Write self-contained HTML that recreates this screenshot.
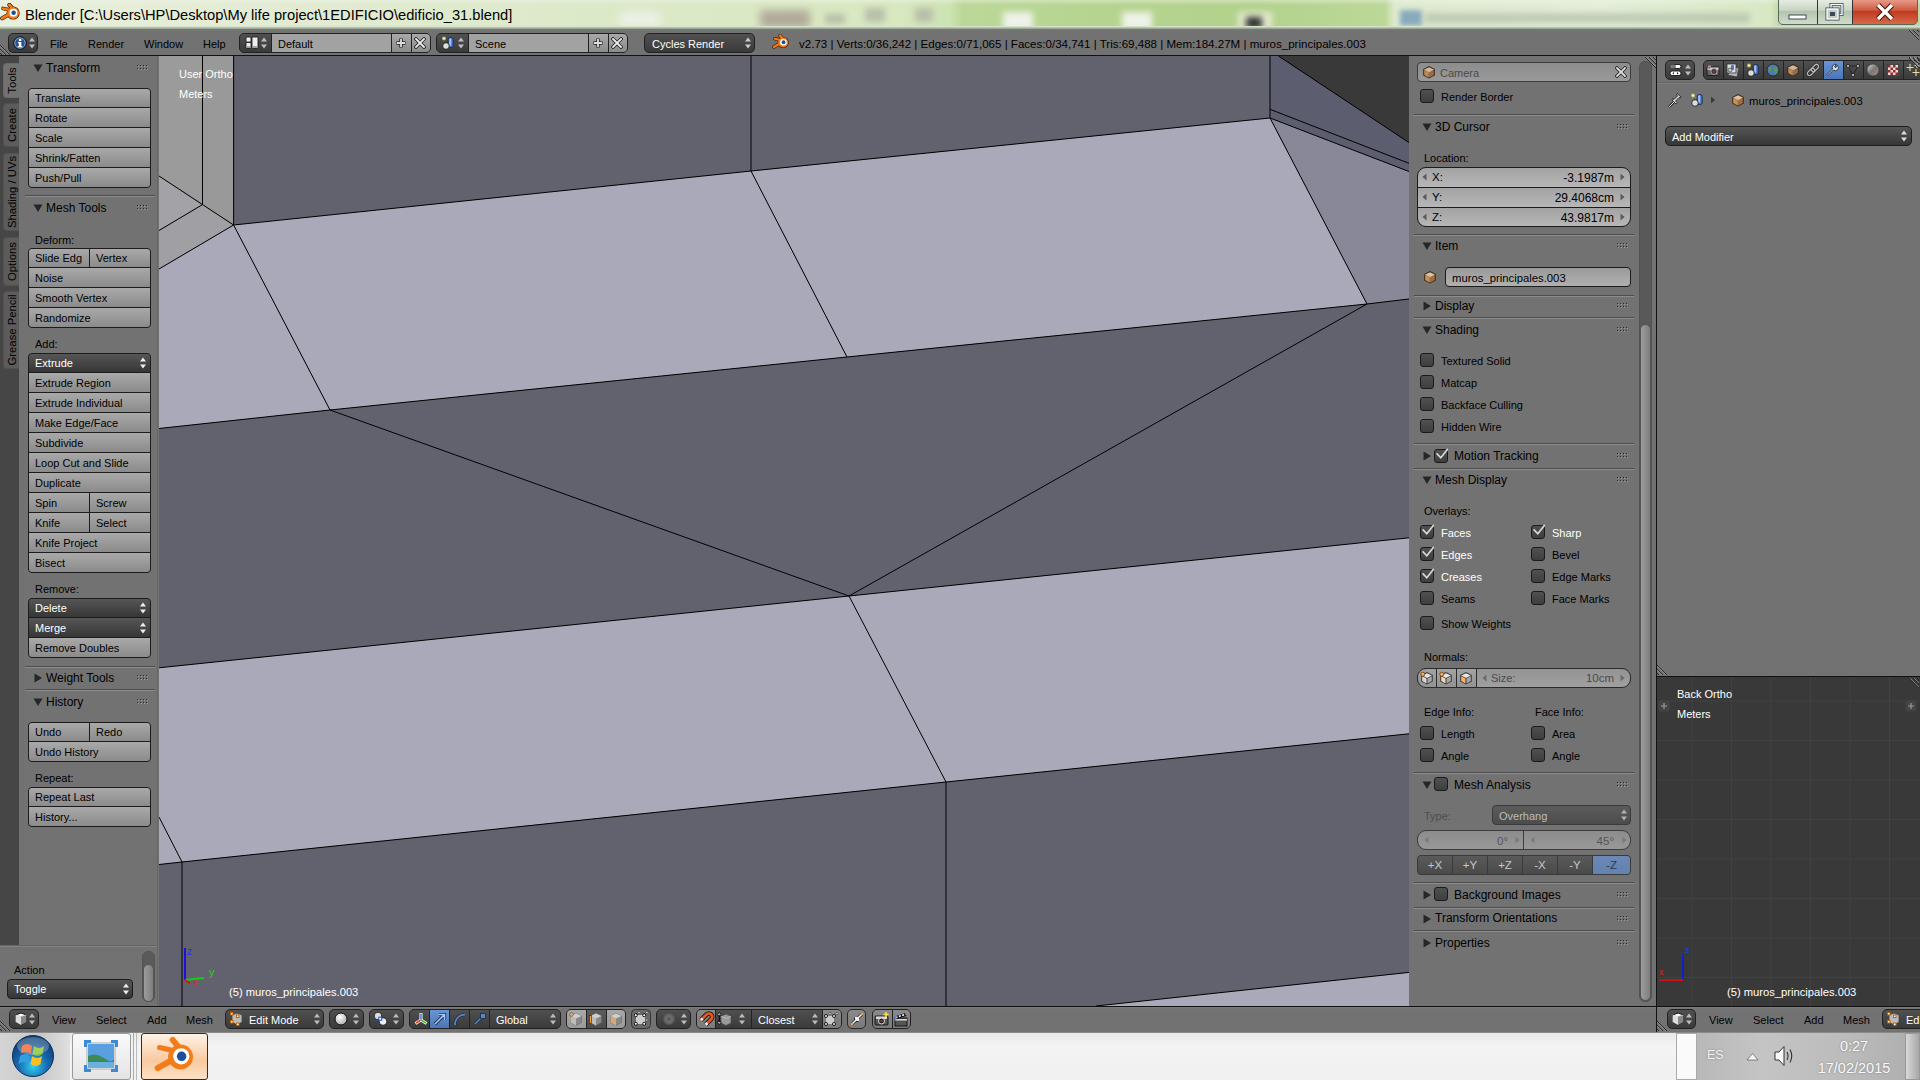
<!DOCTYPE html>
<html><head><meta charset="utf-8">
<style>
*{margin:0;padding:0;box-sizing:border-box}
html,body{width:1920px;height:1080px;overflow:hidden;background:#727272;font-family:"Liberation Sans",sans-serif;font-size:11px;color:#000}
.a{position:absolute}
.t{position:absolute;white-space:nowrap;line-height:1}
</style></head><body>

<div class="a" style="left:0px;top:0px;width:1920px;height:29px;background:linear-gradient(90deg,#e8efdc 0,#e2ebd2 300px,#dce9c8 600px,#d8e8c0 900px,#cde3b2 950px,#bcd898 962px,#b6d490 1100px,#b2d28c 1250px,#bcd898 1385px,#dfead0 1395px,#e4eed8 1600px,#d8e8c4 1770px,#c0d8a8 1780px)"></div>
<div class="a" style="left:0;top:0;width:1920px;height:29px;overflow:hidden"><div class="a" style="left:0;top:0;width:1920px;height:5px;opacity:0.45;background:linear-gradient(#f0f4ea,rgba(240,244,234,0))"></div><div class="a" style="left:760px;top:10px;width:50px;height:18px;background:#a09088;filter:blur(4px);opacity:0.7"></div><div class="a" style="left:620px;top:12px;width:40px;height:14px;background:#f4f4f4;filter:blur(4px);opacity:0.7"></div><div class="a" style="left:825px;top:14px;width:20px;height:10px;background:#b8c0a8;filter:blur(3px)"></div><div class="a" style="left:865px;top:8px;width:20px;height:14px;background:#b8c0a8;filter:blur(3px)"></div><div class="a" style="left:915px;top:8px;width:18px;height:14px;background:#b8c0a8;filter:blur(3px)"></div><div class="a" style="left:1003px;top:12px;width:30px;height:18px;background:#f8f8f8;filter:blur(3px);opacity:0.85"></div><div class="a" style="left:1122px;top:12px;width:30px;height:18px;background:#f8f8f8;filter:blur(3px);opacity:0.85"></div><div class="a" style="left:1238px;top:12px;width:34px;height:18px;background:#f0f0e0;filter:blur(3px);opacity:0.8"></div><div class="a" style="left:1246px;top:17px;width:16px;height:12px;background:#222;filter:blur(3px);opacity:0.9"></div><div class="a" style="left:1400px;top:10px;width:22px;height:16px;background:#5080b0;filter:blur(2.5px);opacity:0.6"></div><div class="a" style="left:1425px;top:13px;width:325px;height:10px;background:#a8b4a0;filter:blur(3px);opacity:0.6"></div><div class="a" style="left:0;top:26px;width:1920px;height:3px;background:linear-gradient(#e8eee0,#8a9a80)"></div></div>
<svg class="a" style="left:0px;top:3px" width="20" height="20" viewBox="0 0 20 20"><g transform="scale(0.625)"><g stroke="#3a1a00" stroke-linecap="round" fill="none"><path d="M20,9L15,3" stroke-width="6.5"/><path d="M17,11.5L5,8.8" stroke-width="6"/><path d="M15,18L3.5,24.5" stroke-width="6.5"/></g><circle cx="21" cy="16" r="10.5" fill="#3a1a00"/><g stroke="#f27c1a" stroke-linecap="round" fill="none"><path d="M20,9L15,3" stroke-width="4.5"/><path d="M17,11.5L5,8.8" stroke-width="4"/><path d="M15,18L3.5,24.5" stroke-width="4.5"/></g><circle cx="21" cy="16" r="9.5" fill="#f27c1a"/><circle cx="21.5" cy="15.5" r="6.2" fill="#fff"/><circle cx="21.8" cy="15.5" r="3.6" fill="#1b4f9c"/></g></svg>
<div class="a" style="left:1778px;top:-2px;width:140px;height:27px;border:1px solid #5a6a5a;border-radius:0 0 5px 5px;overflow:hidden;background:#333"><div class="a" style="left:0;top:0;width:38px;height:25px;background:linear-gradient(#e8eee4,#c8d4c4 45%,#b4c4b0 50%,#d0dccc)"></div><div class="a" style="left:39px;top:0;width:34px;height:25px;background:linear-gradient(#e8eee4,#c8d4c4 45%,#b4c4b0 50%,#d0dccc)"></div><div class="a" style="left:74px;top:0;width:66px;height:25px;background:linear-gradient(#e8a090,#d05a40 45%,#c03a20 50%,#d86a48)"></div></div>
<svg class="a" style="left:1788px;top:13px" width="20" height="8" viewBox="0 0 20 8"><rect x="1" y="2" width="17" height="4" fill="#fff" stroke="#3a4a5a" stroke-width="1"/></svg>
<svg class="a" style="left:1825px;top:3px" width="20" height="18" viewBox="0 0 20 18"><rect x="6" y="1.5" width="11" height="10" fill="none" stroke="#3a4a5a" stroke-width="3"/><rect x="6" y="1.5" width="11" height="10" fill="none" stroke="#fff" stroke-width="1.4"/><rect x="2" y="6" width="11" height="10" fill="#d8e0d8" stroke="#3a4a5a" stroke-width="3"/><rect x="2" y="6" width="11" height="10" fill="#c4ccc4" stroke="#fff" stroke-width="1.4"/><rect x="5" y="9" width="5" height="4" fill="#3a4a5a"/></svg>
<svg class="a" style="left:1873px;top:3px" width="24" height="18" viewBox="0 0 24 18"><path d="M5,2L19,16M19,2L5,16" stroke="#4a1a10" stroke-width="5.5"/><path d="M5,2L19,16M19,2L5,16" stroke="#fff" stroke-width="3.2"/></svg>
<div class="t" style="left:25px;top:7.9px;font-size:14.7px;color:#000;">Blender [C:\Users\HP\Desktop\My life project\1EDIFICIO\edificio_31.blend]</div>
<div class="a" style="left:0px;top:29px;width:1920px;height:27px;background:linear-gradient(#7a7a7a 0,#727272 2px);border-bottom:1px solid #111"></div>
<div class="a" style="left:8px;top:33px;width:30px;height:20px;border:1px solid #222;border-radius:5px;background:linear-gradient(#505050,#3a3a3a);"></div>
<svg class="a" style="left:13px;top:36px" width="14" height="14" viewBox="0 0 14 14"><circle cx="7" cy="7" r="6.3" fill="#2c5590" stroke="#111" stroke-width="1"/><circle cx="7" cy="7" r="5.2" fill="none" stroke="#8aa8d4" stroke-width="0.9"/><rect x="5.9" y="3" width="2.4" height="2" fill="#fff"/><path d="M5,6H8.3V10H9.2V11.3H4.8V10H5.9V7.2H5Z" fill="#fff"/></svg>
<svg class="a" style="left:28px;top:36px" width="8" height="14" viewBox="0 0 8 14"><path d="M1,5.5L4,1.5L7,5.5ZM1,8.5L4,12.5L7,8.5Z" fill="#bdbdbd"/></svg>
<div class="t" style="left:50px;top:38.7px;font-size:11px;color:#000;">File</div>
<div class="t" style="left:88px;top:38.7px;font-size:11px;color:#000;">Render</div>
<div class="t" style="left:144px;top:38.7px;font-size:11px;color:#000;">Window</div>
<div class="t" style="left:203px;top:38.7px;font-size:11px;color:#000;">Help</div>
<div class="a" style="left:239px;top:33px;width:192px;height:20px;border:1px solid #222;border-radius:5px;overflow:hidden;background:#222"><div class="a" style="left:0px;top:0;width:31px;height:18px;background:linear-gradient(#505050,#3a3a3a)"></div><div class="a" style="left:32px;top:0;width:119px;height:18px;background:linear-gradient(#a2a2a2,#a2a2a2)"></div><div class="a" style="left:152px;top:0;width:19px;height:18px;background:linear-gradient(#a8a8a8,#8c8c8c)"></div><div class="a" style="left:172px;top:0;width:19px;height:18px;background:linear-gradient(#a8a8a8,#8c8c8c)"></div></div>
<svg class="a" style="left:245px;top:36px" width="14" height="14" viewBox="0 0 14 14"><rect x="1" y="1" width="5" height="5" rx="1" fill="#eee" stroke="#111" stroke-width="0.8"/><rect x="1" y="6.5" width="5" height="6" rx="1" fill="#eee" stroke="#111" stroke-width="0.8"/><rect x="7" y="1" width="6" height="11.5" rx="1" fill="#eee" stroke="#111" stroke-width="0.8"/><path d="M2,11H5M8,11H12" stroke="#333" stroke-width="0.8"/></svg>
<svg class="a" style="left:260px;top:36px" width="8" height="14" viewBox="0 0 8 14"><path d="M1,5.5L4,1.5L7,5.5ZM1,8.5L4,12.5L7,8.5Z" fill="#bdbdbd"/></svg>
<div class="t" style="left:278px;top:38.7px;font-size:11px;color:#000;">Default</div>
<svg class="a" style="left:395px;top:37px" width="12" height="12" viewBox="0 0 12 12"><path d="M6,1.5V10.5M1.5,6H10.5" stroke="#222" stroke-width="3.4"/><path d="M6,2V10M2,6H10" stroke="#ddd" stroke-width="1.8"/></svg>
<svg class="a" style="left:414px;top:37px" width="12" height="12" viewBox="0 0 12 12"><path d="M2,2L10,10M10,2L2,10" stroke="#222" stroke-width="3.4" stroke-linecap="square"/><path d="M2,2L10,10M10,2L2,10" stroke="#eee" stroke-width="1.8" stroke-linecap="square"/></svg>
<div class="a" style="left:436px;top:33px;width:192px;height:20px;border:1px solid #222;border-radius:5px;overflow:hidden;background:#222"><div class="a" style="left:0px;top:0;width:31px;height:18px;background:linear-gradient(#505050,#3a3a3a)"></div><div class="a" style="left:32px;top:0;width:119px;height:18px;background:linear-gradient(#a2a2a2,#a2a2a2)"></div><div class="a" style="left:152px;top:0;width:19px;height:18px;background:linear-gradient(#a8a8a8,#8c8c8c)"></div><div class="a" style="left:172px;top:0;width:19px;height:18px;background:linear-gradient(#a8a8a8,#8c8c8c)"></div></div>
<svg class="a" style="left:441px;top:36px" width="14" height="14" viewBox="0 0 14 14"><circle cx="3" cy="2.5" r="2" fill="#e8e860" opacity="0.7"/><circle cx="3" cy="2.5" r="1" fill="#ffffc0"/><rect x="7.2" y="1.5" width="5" height="10" rx="2" fill="#4a7ad0" stroke="#112244" stroke-width="0.8"/><rect x="8.2" y="2.5" width="2" height="7" fill="#a8c4f0"/><circle cx="5" cy="10" r="3.3" fill="#ddd" stroke="#111" stroke-width="0.8"/></svg>
<svg class="a" style="left:457px;top:36px" width="8" height="14" viewBox="0 0 8 14"><path d="M1,5.5L4,1.5L7,5.5ZM1,8.5L4,12.5L7,8.5Z" fill="#bdbdbd"/></svg>
<div class="t" style="left:475px;top:38.7px;font-size:11px;color:#000;">Scene</div>
<svg class="a" style="left:592px;top:37px" width="12" height="12" viewBox="0 0 12 12"><path d="M6,1.5V10.5M1.5,6H10.5" stroke="#222" stroke-width="3.4"/><path d="M6,2V10M2,6H10" stroke="#ddd" stroke-width="1.8"/></svg>
<svg class="a" style="left:611px;top:37px" width="12" height="12" viewBox="0 0 12 12"><path d="M2,2L10,10M10,2L2,10" stroke="#222" stroke-width="3.4" stroke-linecap="square"/><path d="M2,2L10,10M10,2L2,10" stroke="#eee" stroke-width="1.8" stroke-linecap="square"/></svg>
<div class="a" style="left:644px;top:33px;width:111px;height:20px;border:1px solid #222;border-radius:5px;background:linear-gradient(#505050,#3a3a3a);"></div>
<div class="t" style="left:652px;top:38.7px;font-size:11px;color:#fff;">Cycles Render</div>
<svg class="a" style="left:744px;top:36px" width="8" height="14" viewBox="0 0 8 14"><path d="M1,5.5L4,1.5L7,5.5ZM1,8.5L4,12.5L7,8.5Z" fill="#ccc"/></svg>
<svg class="a" style="left:772px;top:34px" width="17" height="17" viewBox="0 0 17 17"><g transform="scale(0.53125)"><g stroke="#3a1a00" stroke-linecap="round" fill="none"><path d="M20,9L15,3" stroke-width="6.5"/><path d="M17,11.5L5,8.8" stroke-width="6"/><path d="M15,18L3.5,24.5" stroke-width="6.5"/></g><circle cx="21" cy="16" r="10.5" fill="#3a1a00"/><g stroke="#f27c1a" stroke-linecap="round" fill="none"><path d="M20,9L15,3" stroke-width="4.5"/><path d="M17,11.5L5,8.8" stroke-width="4"/><path d="M15,18L3.5,24.5" stroke-width="4.5"/></g><circle cx="21" cy="16" r="9.5" fill="#f27c1a"/><circle cx="21.5" cy="15.5" r="6.2" fill="#fff"/><circle cx="21.8" cy="15.5" r="3.6" fill="#1b4f9c"/></g></svg>
<div class="t" style="left:799px;top:39.2px;font-size:11.55px;color:#000;">v2.73 | Verts:0/36,242 | Edges:0/71,065 | Faces:0/34,741 | Tris:69,488 | Mem:184.27M | muros_principales.003</div>
<div class="a" style="left:0px;top:56px;width:19px;height:890px;background:#464646"></div>
<div class="a" style="left:19px;top:56px;width:139px;height:890px;background:#727272"></div>
<div class="a" style="left:3px;top:98px;width:35px;height:17px;transform:rotate(-90deg);transform-origin:0 0;background:#727272;border-radius:4px 4px 0 0;border:1px solid #6a6a6a;border-bottom:none;text-align:center;line-height:16px;font-size:11.3px;color:#000">Tools</div>
<div class="a" style="left:3px;top:147px;width:44px;height:16px;transform:rotate(-90deg);transform-origin:0 0;background:#5c5c5c;border-radius:4px 4px 0 0;border:1px solid #515151;border-bottom:none;text-align:center;line-height:16px;font-size:11.3px;color:#000">Create</div>
<div class="a" style="left:3px;top:231px;width:78px;height:16px;transform:rotate(-90deg);transform-origin:0 0;background:#5c5c5c;border-radius:4px 4px 0 0;border:1px solid #515151;border-bottom:none;text-align:center;line-height:16px;font-size:11.3px;color:#000">Shading / UVs</div>
<div class="a" style="left:3px;top:286px;width:49px;height:16px;transform:rotate(-90deg);transform-origin:0 0;background:#5c5c5c;border-radius:4px 4px 0 0;border:1px solid #515151;border-bottom:none;text-align:center;line-height:16px;font-size:11.3px;color:#000">Options</div>
<div class="a" style="left:3px;top:369px;width:78px;height:16px;transform:rotate(-90deg);transform-origin:0 0;background:#5c5c5c;border-radius:4px 4px 0 0;border:1px solid #515151;border-bottom:none;text-align:center;line-height:16px;font-size:11.3px;color:#000">Grease Pencil</div>
<svg class="a" style="left:33px;top:63px" width="10" height="10" viewBox="0 0 10 10"><path d="M0.5,1.5H9.5L5,9Z" fill="#262626"/></svg>
<div class="t" style="left:46px;top:61.8px;font-size:12px;color:#000;">Transform</div>
<svg class="a" style="left:137px;top:65px" width="12" height="6" viewBox="0 0 12 6"><rect x="0" y="0" width="1" height="1" fill="#2a2a2a"/><rect x="1" y="1" width="1" height="1" fill="#9a9a9a"/><rect x="0" y="3" width="1" height="1" fill="#2a2a2a"/><rect x="1" y="4" width="1" height="1" fill="#9a9a9a"/><rect x="3" y="0" width="1" height="1" fill="#2a2a2a"/><rect x="4" y="1" width="1" height="1" fill="#9a9a9a"/><rect x="3" y="3" width="1" height="1" fill="#2a2a2a"/><rect x="4" y="4" width="1" height="1" fill="#9a9a9a"/><rect x="6" y="0" width="1" height="1" fill="#2a2a2a"/><rect x="7" y="1" width="1" height="1" fill="#9a9a9a"/><rect x="6" y="3" width="1" height="1" fill="#2a2a2a"/><rect x="7" y="4" width="1" height="1" fill="#9a9a9a"/><rect x="9" y="0" width="1" height="1" fill="#2a2a2a"/><rect x="10" y="1" width="1" height="1" fill="#9a9a9a"/><rect x="9" y="3" width="1" height="1" fill="#2a2a2a"/><rect x="10" y="4" width="1" height="1" fill="#9a9a9a"/></svg>
<div class="a" style="left:28px;top:88px;width:123px;height:100px;border:1px solid #1c1c1c;border-radius:4px;overflow:hidden;background:#1c1c1c">
<div class="a" style="left:0px;top:0px;width:121px;height:18px;background:linear-gradient(#a9a9a9,#8b8b8b);"></div>
<div class="t" style="left:6px;top:0px;line-height:19px;font-size:11px;color:#000">Translate</div>
<div class="a" style="left:0px;top:19px;width:121px;height:19px;background:linear-gradient(#a9a9a9,#8b8b8b);"></div>
<div class="t" style="left:6px;top:20px;line-height:19px;font-size:11px;color:#000">Rotate</div>
<div class="a" style="left:0px;top:39px;width:121px;height:19px;background:linear-gradient(#a9a9a9,#8b8b8b);"></div>
<div class="t" style="left:6px;top:40px;line-height:19px;font-size:11px;color:#000">Scale</div>
<div class="a" style="left:0px;top:59px;width:121px;height:19px;background:linear-gradient(#a9a9a9,#8b8b8b);"></div>
<div class="t" style="left:6px;top:60px;line-height:19px;font-size:11px;color:#000">Shrink/Fatten</div>
<div class="a" style="left:0px;top:79px;width:121px;height:19px;background:linear-gradient(#a9a9a9,#8b8b8b);"></div>
<div class="t" style="left:6px;top:80px;line-height:19px;font-size:11px;color:#000">Push/Pull</div>
</div>
<div class="a" style="left:25px;top:195px;width:130px;height:1px;background:#4e4e4e;"></div>
<div class="a" style="left:25px;top:196px;width:130px;height:1px;background:#8c8c8c;"></div>
<svg class="a" style="left:33px;top:203px" width="10" height="10" viewBox="0 0 10 10"><path d="M0.5,1.5H9.5L5,9Z" fill="#262626"/></svg>
<div class="t" style="left:46px;top:201.8px;font-size:12px;color:#000;">Mesh Tools</div>
<svg class="a" style="left:137px;top:205px" width="12" height="6" viewBox="0 0 12 6"><rect x="0" y="0" width="1" height="1" fill="#2a2a2a"/><rect x="1" y="1" width="1" height="1" fill="#9a9a9a"/><rect x="0" y="3" width="1" height="1" fill="#2a2a2a"/><rect x="1" y="4" width="1" height="1" fill="#9a9a9a"/><rect x="3" y="0" width="1" height="1" fill="#2a2a2a"/><rect x="4" y="1" width="1" height="1" fill="#9a9a9a"/><rect x="3" y="3" width="1" height="1" fill="#2a2a2a"/><rect x="4" y="4" width="1" height="1" fill="#9a9a9a"/><rect x="6" y="0" width="1" height="1" fill="#2a2a2a"/><rect x="7" y="1" width="1" height="1" fill="#9a9a9a"/><rect x="6" y="3" width="1" height="1" fill="#2a2a2a"/><rect x="7" y="4" width="1" height="1" fill="#9a9a9a"/><rect x="9" y="0" width="1" height="1" fill="#2a2a2a"/><rect x="10" y="1" width="1" height="1" fill="#9a9a9a"/><rect x="9" y="3" width="1" height="1" fill="#2a2a2a"/><rect x="10" y="4" width="1" height="1" fill="#9a9a9a"/></svg>
<div class="t" style="left:35px;top:234.7px;font-size:11px;color:#000;">Deform:</div>
<div class="a" style="left:28px;top:248px;width:123px;height:80px;border:1px solid #1c1c1c;border-radius:4px;overflow:hidden;background:#1c1c1c">
<div class="a" style="left:0px;top:0px;width:60px;height:18px;background:linear-gradient(#a9a9a9,#8b8b8b);"></div>
<div class="t" style="left:6px;top:0px;line-height:19px;font-size:11px;color:#000">Slide Edg</div>
<div class="a" style="left:61px;top:0px;width:60px;height:18px;background:linear-gradient(#a9a9a9,#8b8b8b);"></div>
<div class="t" style="left:67px;top:0px;line-height:19px;font-size:11px;color:#000">Vertex</div>
<div class="a" style="left:0px;top:19px;width:121px;height:19px;background:linear-gradient(#a9a9a9,#8b8b8b);"></div>
<div class="t" style="left:6px;top:20px;line-height:19px;font-size:11px;color:#000">Noise</div>
<div class="a" style="left:0px;top:39px;width:121px;height:19px;background:linear-gradient(#a9a9a9,#8b8b8b);"></div>
<div class="t" style="left:6px;top:40px;line-height:19px;font-size:11px;color:#000">Smooth Vertex</div>
<div class="a" style="left:0px;top:59px;width:121px;height:19px;background:linear-gradient(#a9a9a9,#8b8b8b);"></div>
<div class="t" style="left:6px;top:60px;line-height:19px;font-size:11px;color:#000">Randomize</div>
</div>
<div class="t" style="left:35px;top:339.2px;font-size:11px;color:#000;">Add:</div>
<div class="a" style="left:28px;top:353px;width:123px;height:220px;border:1px solid #1c1c1c;border-radius:4px;overflow:hidden;background:#1c1c1c">
<div class="a" style="left:0px;top:0px;width:121px;height:18px;background:linear-gradient(#565656,#363636);"></div>
<div class="t" style="left:6px;top:0px;line-height:19px;font-size:11px;color:#fff">Extrude</div>
<svg class="a" style="left:110px;top:1.5px" width="8" height="14" viewBox="0 0 8 14"><path d="M1,5.5L4,1.5L7,5.5ZM1,8.5L4,12.5L7,8.5Z" fill="#fff" opacity="0.9"/></svg>
<div class="a" style="left:0px;top:19px;width:121px;height:19px;background:linear-gradient(#a9a9a9,#8b8b8b);"></div>
<div class="t" style="left:6px;top:20px;line-height:19px;font-size:11px;color:#000">Extrude Region</div>
<div class="a" style="left:0px;top:39px;width:121px;height:19px;background:linear-gradient(#a9a9a9,#8b8b8b);"></div>
<div class="t" style="left:6px;top:40px;line-height:19px;font-size:11px;color:#000">Extrude Individual</div>
<div class="a" style="left:0px;top:59px;width:121px;height:19px;background:linear-gradient(#a9a9a9,#8b8b8b);"></div>
<div class="t" style="left:6px;top:60px;line-height:19px;font-size:11px;color:#000">Make Edge/Face</div>
<div class="a" style="left:0px;top:79px;width:121px;height:19px;background:linear-gradient(#a9a9a9,#8b8b8b);"></div>
<div class="t" style="left:6px;top:80px;line-height:19px;font-size:11px;color:#000">Subdivide</div>
<div class="a" style="left:0px;top:99px;width:121px;height:19px;background:linear-gradient(#a9a9a9,#8b8b8b);"></div>
<div class="t" style="left:6px;top:100px;line-height:19px;font-size:11px;color:#000">Loop Cut and Slide</div>
<div class="a" style="left:0px;top:119px;width:121px;height:19px;background:linear-gradient(#a9a9a9,#8b8b8b);"></div>
<div class="t" style="left:6px;top:120px;line-height:19px;font-size:11px;color:#000">Duplicate</div>
<div class="a" style="left:0px;top:139px;width:60px;height:19px;background:linear-gradient(#a9a9a9,#8b8b8b);"></div>
<div class="t" style="left:6px;top:140px;line-height:19px;font-size:11px;color:#000">Spin</div>
<div class="a" style="left:61px;top:139px;width:60px;height:19px;background:linear-gradient(#a9a9a9,#8b8b8b);"></div>
<div class="t" style="left:67px;top:140px;line-height:19px;font-size:11px;color:#000">Screw</div>
<div class="a" style="left:0px;top:159px;width:60px;height:19px;background:linear-gradient(#a9a9a9,#8b8b8b);"></div>
<div class="t" style="left:6px;top:160px;line-height:19px;font-size:11px;color:#000">Knife</div>
<div class="a" style="left:61px;top:159px;width:60px;height:19px;background:linear-gradient(#a9a9a9,#8b8b8b);"></div>
<div class="t" style="left:67px;top:160px;line-height:19px;font-size:11px;color:#000">Select</div>
<div class="a" style="left:0px;top:179px;width:121px;height:19px;background:linear-gradient(#a9a9a9,#8b8b8b);"></div>
<div class="t" style="left:6px;top:180px;line-height:19px;font-size:11px;color:#000">Knife Project</div>
<div class="a" style="left:0px;top:199px;width:121px;height:19px;background:linear-gradient(#a9a9a9,#8b8b8b);"></div>
<div class="t" style="left:6px;top:200px;line-height:19px;font-size:11px;color:#000">Bisect</div>
</div>
<div class="t" style="left:35px;top:584.2px;font-size:11px;color:#000;">Remove:</div>
<div class="a" style="left:28px;top:598px;width:123px;height:60px;border:1px solid #1c1c1c;border-radius:4px;overflow:hidden;background:#1c1c1c">
<div class="a" style="left:0px;top:0px;width:121px;height:18px;background:linear-gradient(#565656,#363636);"></div>
<div class="t" style="left:6px;top:0px;line-height:19px;font-size:11px;color:#fff">Delete</div>
<svg class="a" style="left:110px;top:1.5px" width="8" height="14" viewBox="0 0 8 14"><path d="M1,5.5L4,1.5L7,5.5ZM1,8.5L4,12.5L7,8.5Z" fill="#fff" opacity="0.9"/></svg>
<div class="a" style="left:0px;top:19px;width:121px;height:19px;background:linear-gradient(#565656,#363636);"></div>
<div class="t" style="left:6px;top:20px;line-height:19px;font-size:11px;color:#fff">Merge</div>
<svg class="a" style="left:110px;top:21.5px" width="8" height="14" viewBox="0 0 8 14"><path d="M1,5.5L4,1.5L7,5.5ZM1,8.5L4,12.5L7,8.5Z" fill="#fff" opacity="0.9"/></svg>
<div class="a" style="left:0px;top:39px;width:121px;height:19px;background:linear-gradient(#a9a9a9,#8b8b8b);"></div>
<div class="t" style="left:6px;top:40px;line-height:19px;font-size:11px;color:#000">Remove Doubles</div>
</div>
<div class="a" style="left:25px;top:666px;width:130px;height:1px;background:#4e4e4e;"></div>
<div class="a" style="left:25px;top:667px;width:130px;height:1px;background:#8c8c8c;"></div>
<svg class="a" style="left:33px;top:673px" width="10" height="10" viewBox="0 0 10 10"><path d="M1.5,0.5V9.5L9,5Z" fill="#262626"/></svg>
<div class="t" style="left:46px;top:671.8px;font-size:12px;color:#000;">Weight Tools</div>
<svg class="a" style="left:137px;top:675px" width="12" height="6" viewBox="0 0 12 6"><rect x="0" y="0" width="1" height="1" fill="#2a2a2a"/><rect x="1" y="1" width="1" height="1" fill="#9a9a9a"/><rect x="0" y="3" width="1" height="1" fill="#2a2a2a"/><rect x="1" y="4" width="1" height="1" fill="#9a9a9a"/><rect x="3" y="0" width="1" height="1" fill="#2a2a2a"/><rect x="4" y="1" width="1" height="1" fill="#9a9a9a"/><rect x="3" y="3" width="1" height="1" fill="#2a2a2a"/><rect x="4" y="4" width="1" height="1" fill="#9a9a9a"/><rect x="6" y="0" width="1" height="1" fill="#2a2a2a"/><rect x="7" y="1" width="1" height="1" fill="#9a9a9a"/><rect x="6" y="3" width="1" height="1" fill="#2a2a2a"/><rect x="7" y="4" width="1" height="1" fill="#9a9a9a"/><rect x="9" y="0" width="1" height="1" fill="#2a2a2a"/><rect x="10" y="1" width="1" height="1" fill="#9a9a9a"/><rect x="9" y="3" width="1" height="1" fill="#2a2a2a"/><rect x="10" y="4" width="1" height="1" fill="#9a9a9a"/></svg>
<div class="a" style="left:25px;top:689px;width:130px;height:1px;background:#4e4e4e;"></div>
<div class="a" style="left:25px;top:690px;width:130px;height:1px;background:#8c8c8c;"></div>
<svg class="a" style="left:33px;top:697px" width="10" height="10" viewBox="0 0 10 10"><path d="M0.5,1.5H9.5L5,9Z" fill="#262626"/></svg>
<div class="t" style="left:46px;top:695.8px;font-size:12px;color:#000;">History</div>
<svg class="a" style="left:137px;top:699px" width="12" height="6" viewBox="0 0 12 6"><rect x="0" y="0" width="1" height="1" fill="#2a2a2a"/><rect x="1" y="1" width="1" height="1" fill="#9a9a9a"/><rect x="0" y="3" width="1" height="1" fill="#2a2a2a"/><rect x="1" y="4" width="1" height="1" fill="#9a9a9a"/><rect x="3" y="0" width="1" height="1" fill="#2a2a2a"/><rect x="4" y="1" width="1" height="1" fill="#9a9a9a"/><rect x="3" y="3" width="1" height="1" fill="#2a2a2a"/><rect x="4" y="4" width="1" height="1" fill="#9a9a9a"/><rect x="6" y="0" width="1" height="1" fill="#2a2a2a"/><rect x="7" y="1" width="1" height="1" fill="#9a9a9a"/><rect x="6" y="3" width="1" height="1" fill="#2a2a2a"/><rect x="7" y="4" width="1" height="1" fill="#9a9a9a"/><rect x="9" y="0" width="1" height="1" fill="#2a2a2a"/><rect x="10" y="1" width="1" height="1" fill="#9a9a9a"/><rect x="9" y="3" width="1" height="1" fill="#2a2a2a"/><rect x="10" y="4" width="1" height="1" fill="#9a9a9a"/></svg>
<div class="a" style="left:28px;top:722px;width:123px;height:40px;border:1px solid #1c1c1c;border-radius:4px;overflow:hidden;background:#1c1c1c">
<div class="a" style="left:0px;top:0px;width:60px;height:18px;background:linear-gradient(#a9a9a9,#8b8b8b);"></div>
<div class="t" style="left:6px;top:0px;line-height:19px;font-size:11px;color:#000">Undo</div>
<div class="a" style="left:61px;top:0px;width:60px;height:18px;background:linear-gradient(#a9a9a9,#8b8b8b);"></div>
<div class="t" style="left:67px;top:0px;line-height:19px;font-size:11px;color:#000">Redo</div>
<div class="a" style="left:0px;top:19px;width:121px;height:19px;background:linear-gradient(#a9a9a9,#8b8b8b);"></div>
<div class="t" style="left:6px;top:20px;line-height:19px;font-size:11px;color:#000">Undo History</div>
</div>
<div class="t" style="left:35px;top:773.2px;font-size:11px;color:#000;">Repeat:</div>
<div class="a" style="left:28px;top:787px;width:123px;height:40px;border:1px solid #1c1c1c;border-radius:4px;overflow:hidden;background:#1c1c1c">
<div class="a" style="left:0px;top:0px;width:121px;height:18px;background:linear-gradient(#a9a9a9,#8b8b8b);"></div>
<div class="t" style="left:6px;top:0px;line-height:19px;font-size:11px;color:#000">Repeat Last</div>
<div class="a" style="left:0px;top:19px;width:121px;height:19px;background:linear-gradient(#a9a9a9,#8b8b8b);"></div>
<div class="t" style="left:6px;top:20px;line-height:19px;font-size:11px;color:#000">History...</div>
</div>
<div class="a" style="left:0px;top:946px;width:158px;height:60px;background:#727272;border-top:1px solid #828282"></div>
<div class="a" style="left:0px;top:945px;width:158px;height:1px;background:#656565"></div>
<div class="a" style="left:157px;top:56px;width:1px;height:950px;background:#666"></div>
<div class="t" style="left:14px;top:964.7px;font-size:11px;color:#000;">Action</div>
<div class="a" style="left:7px;top:979px;width:126px;height:20px;border:1px solid #1c1c1c;border-radius:4px;background:linear-gradient(#565656,#363636);"></div>
<div class="t" style="left:14px;top:984.2px;font-size:11px;color:#fff;">Toggle</div>
<svg class="a" style="left:122px;top:982.0px" width="8" height="14" viewBox="0 0 8 14"><path d="M1,5.5L4,1.5L7,5.5ZM1,8.5L4,12.5L7,8.5Z" fill="#fff" opacity="0.9"/></svg>
<div class="a" style="left:142px;top:951px;width:13px;height:51px;border-radius:6px;background:#5a5a5a;border:1px solid #555"></div>
<div class="a" style="left:143px;top:964px;width:11px;height:38px;border-radius:6px;background:linear-gradient(90deg,#9c9c9c,#7e7e7e);border:1px solid #555"></div>
<svg class="a" style="left:159px;top:56px" width="1250" height="950" viewBox="159 56 1250 950">
<rect x="159" y="56" width="1250" height="950" fill="#393939"/>
<polygon fill="#62626e" points="233.6,56 1270,56 1270,118 751,171 233.6,225"/>
<polygon fill="#9b9b9b" points="159,56 202.5,56 202.5,204.6 159,176"/>
<polygon fill="#999999" points="202.5,56 233.6,56 233.6,225 202.5,204.6"/>
<polygon fill="#a3a3a7" points="159,176 202.5,204.6 159,230.5"/>
<polygon fill="#a0a0a4" points="159,230.5 202.5,204.6 233.6,225 159,269"/>
<polygon fill="#a9a9b9" points="159,269 233.6,225 330,410 159,428.5"/>
<polygon fill="#a9a9b9" points="233.6,225 751,171 847,357 330,410"/>
<polygon fill="#a9a9b9" points="751,171 1270,118 1367,304 847,357"/>
<polygon fill="#5d5d70" points="1270,56 1278.5,56 1409,142.6 1409,171.5 1270,118"/>
<polygon fill="#888898" points="1270,118 1409,171.5 1409,299 1367,304"/>
<polygon fill="#62626e" points="159,428.5 330,410 847,357 1367,304 1409,299 1409,537.8 849,596 159,667.8"/>
<polygon fill="#a9a9b9" points="159,667.8 849,596 1409,537.8 1409,733.8 946,782 182,862 159,864.5"/>
<polygon fill="#62626e" points="159,864.5 182,862 946,782 1409,733.8 1409,972.4 1096,1006 159,1006"/>
<polygon fill="#a9a9b9" points="1096,1006 1409,972.4 1409,1006"/>
<g stroke="#000" stroke-width="1" fill="none">
<path d="M202.5,56V204.6M233.6,56V225M751,56V171M1270,56V118"/>
<path d="M159,176L202.5,204.6L233.6,225M159,230.5L202.5,204.6M159,269L233.6,225"/>
<path d="M233.6,225L751,171L1270,118M233.6,225L330,410M751,171L847,357M1270,118L1367,304"/>
<path d="M159,428.5L330,410L847,357L1367,304L1409,299M330,410L849,596L1367,304"/>
<path d="M159,667.8L849,596L1409,537.8M849,596L946,782M159,817L182,862M159,864.5L182,862L946,782L1409,733.8"/>
<path d="M182,862V1006M946,782V1006M1096,1006L1409,972.4"/>
<path d="M1278.5,56L1409,142.6M1270,109.3L1409,163.3M1270,118L1409,171.5"/>
</g>
</svg>
<div class="t" style="left:179px;top:69.2px;font-size:11px;color:#fff;">User Ortho</div>
<div class="t" style="left:179px;top:89.2px;font-size:11px;color:#fff;">Meters</div>
<div class="t" style="left:229px;top:987.1px;font-size:11.2px;color:#fff;">(5) muros_principales.003</div>
<svg class="a" style="left:175px;top:940px" width="50" height="50" viewBox="0 0 50 50"><path d="M10,8V40" stroke="#1a10e0" stroke-width="2"/><path d="M10,40L29,38" stroke="#10d010" stroke-width="2"/><path d="M10,40L15,43.5" stroke="#e01010" stroke-width="2"/><text x="12" y="15" font-size="10" fill="#2a30f0" font-family="Liberation Sans">z</text><text x="34" y="36" font-size="11" fill="#20d020" font-family="Liberation Sans">y</text><text x="18" y="45" font-size="9" fill="#e02020" font-family="Liberation Sans">x</text></svg>
<div class="a" style="left:1409px;top:56px;width:247px;height:950px;background:#727272"></div>
<div class="a" style="left:1409px;top:56px;width:230px;height:4px;overflow:hidden"><div class="t" style="left:15px;top:-9px;font-size:11px;color:#222">Local Camera:</div></div>
<svg class="a" style="left:1643px;top:57px" width="13" height="13" viewBox="0 0 13 13"><path d="M2,0L13,11M6,0L13,7M10,0L13,3" stroke="#2a2a2a" stroke-width="1"/><path d="M3,0L13,10M7,0L13,6M11,0L13,2" stroke="#9a9a9a" stroke-width="0.7"/></svg>
<div class="a" style="left:1417px;top:62px;width:214px;height:20px;border:1px solid #3c3c3c;border-radius:4px;background:linear-gradient(#8c8c8c,#9a9a9a)"></div>
<svg class="a" style="left:1422px;top:65px" width="14" height="14" viewBox="0 0 14 14"><path d="M7,1L12.8,4V10.5L7,13.5L1.2,10.5V4Z" fill="#3a2a1a"/><path d="M7,2.2L11.8,4.6L7,7L2.2,4.6Z" fill="#d6b690"/><path d="M2.2,5.3L6.5,7.6V12.4L2.2,10.1Z" fill="#c08850"/><path d="M7.5,7.6L11.8,5.3V10.1L7.5,12.4Z" fill="#9a6a40"/><path d="M2.2,4.8L7,7.2L11.5,4.9M7,7.2V12.3" stroke="#fff" stroke-opacity="0.55" stroke-width="0.8" fill="none"/></svg>
<div class="t" style="left:1440px;top:67.7px;font-size:11px;color:#4a4a4a;">Camera</div>
<svg class="a" style="left:1615px;top:66px" width="12" height="12" viewBox="0 0 12 12"><path d="M2,2L10,10M10,2L2,10" stroke="#222" stroke-width="3.4" stroke-linecap="square"/><path d="M2,2L10,10M10,2L2,10" stroke="#ddd" stroke-width="1.8" stroke-linecap="square"/></svg>
<div class="a" style="left:1420px;top:89px;width:14px;height:14px;border:1px solid #1a1a1a;border-radius:3px;background:linear-gradient(#505050,#3e3e3e)"></div>
<div class="t" style="left:1441px;top:92.2px;font-size:11px;color:#000;">Render Border</div>
<div class="a" style="left:1414px;top:114px;width:220px;height:1px;background:#4e4e4e;"></div>
<div class="a" style="left:1414px;top:115px;width:220px;height:1px;background:#8c8c8c;"></div>
<svg class="a" style="left:1422px;top:122px" width="10" height="10" viewBox="0 0 10 10"><path d="M0.5,1.5H9.5L5,9Z" fill="#262626"/></svg>
<div class="t" style="left:1435px;top:120.8px;font-size:12px;color:#000;">3D Cursor</div>
<svg class="a" style="left:1617px;top:124px" width="12" height="6" viewBox="0 0 12 6"><rect x="0" y="0" width="1" height="1" fill="#2a2a2a"/><rect x="1" y="1" width="1" height="1" fill="#9a9a9a"/><rect x="0" y="3" width="1" height="1" fill="#2a2a2a"/><rect x="1" y="4" width="1" height="1" fill="#9a9a9a"/><rect x="3" y="0" width="1" height="1" fill="#2a2a2a"/><rect x="4" y="1" width="1" height="1" fill="#9a9a9a"/><rect x="3" y="3" width="1" height="1" fill="#2a2a2a"/><rect x="4" y="4" width="1" height="1" fill="#9a9a9a"/><rect x="6" y="0" width="1" height="1" fill="#2a2a2a"/><rect x="7" y="1" width="1" height="1" fill="#9a9a9a"/><rect x="6" y="3" width="1" height="1" fill="#2a2a2a"/><rect x="7" y="4" width="1" height="1" fill="#9a9a9a"/><rect x="9" y="0" width="1" height="1" fill="#2a2a2a"/><rect x="10" y="1" width="1" height="1" fill="#9a9a9a"/><rect x="9" y="3" width="1" height="1" fill="#2a2a2a"/><rect x="10" y="4" width="1" height="1" fill="#9a9a9a"/></svg>
<div class="t" style="left:1424px;top:153.2px;font-size:11px;color:#000;">Location:</div>
<div class="a" style="left:1417px;top:167px;width:214px;height:60px;border:1px solid #1c1c1c;border-radius:9px;overflow:hidden;background:#1c1c1c"><div class="a" style="left:0;top:0;width:212px;height:19px;background:linear-gradient(#a3a3a3,#b7b7b7);"></div><div class="a" style="left:0;top:20px;width:212px;height:19px;background:linear-gradient(#a3a3a3,#b7b7b7);"></div><div class="a" style="left:0;top:40px;width:212px;height:18px;background:linear-gradient(#a3a3a3,#b7b7b7);"></div></div>
<svg class="a" style="left:1422px;top:172.5px" width="5" height="8" viewBox="0 0 5 8"><path d="M4.5,0.5V7.5L0.5,4Z" fill="#5a5a5a"/></svg>
<svg class="a" style="left:1620px;top:172.5px" width="5" height="8" viewBox="0 0 5 8"><path d="M0.5,0.5V7.5L4.5,4Z" fill="#5a5a5a"/></svg>
<div class="t" style="left:1432px;top:171.9px;font-size:11.5px;color:#000;">X:</div>
<div class="t" style="right:306px;top:171.7px;font-size:12px;color:#000;">-3.1987m</div>
<svg class="a" style="left:1422px;top:192.5px" width="5" height="8" viewBox="0 0 5 8"><path d="M4.5,0.5V7.5L0.5,4Z" fill="#5a5a5a"/></svg>
<svg class="a" style="left:1620px;top:192.5px" width="5" height="8" viewBox="0 0 5 8"><path d="M0.5,0.5V7.5L4.5,4Z" fill="#5a5a5a"/></svg>
<div class="t" style="left:1432px;top:191.9px;font-size:11.5px;color:#000;">Y:</div>
<div class="t" style="right:306px;top:191.7px;font-size:12px;color:#000;">29.4068cm</div>
<svg class="a" style="left:1422px;top:212.5px" width="5" height="8" viewBox="0 0 5 8"><path d="M4.5,0.5V7.5L0.5,4Z" fill="#5a5a5a"/></svg>
<svg class="a" style="left:1620px;top:212.5px" width="5" height="8" viewBox="0 0 5 8"><path d="M0.5,0.5V7.5L4.5,4Z" fill="#5a5a5a"/></svg>
<div class="t" style="left:1432px;top:211.9px;font-size:11.5px;color:#000;">Z:</div>
<div class="t" style="right:306px;top:211.7px;font-size:12px;color:#000;">43.9817m</div>
<div class="a" style="left:1414px;top:234px;width:220px;height:1px;background:#4e4e4e;"></div>
<div class="a" style="left:1414px;top:235px;width:220px;height:1px;background:#8c8c8c;"></div>
<svg class="a" style="left:1422px;top:241px" width="10" height="10" viewBox="0 0 10 10"><path d="M0.5,1.5H9.5L5,9Z" fill="#262626"/></svg>
<div class="t" style="left:1435px;top:239.8px;font-size:12px;color:#000;">Item</div>
<svg class="a" style="left:1617px;top:243px" width="12" height="6" viewBox="0 0 12 6"><rect x="0" y="0" width="1" height="1" fill="#2a2a2a"/><rect x="1" y="1" width="1" height="1" fill="#9a9a9a"/><rect x="0" y="3" width="1" height="1" fill="#2a2a2a"/><rect x="1" y="4" width="1" height="1" fill="#9a9a9a"/><rect x="3" y="0" width="1" height="1" fill="#2a2a2a"/><rect x="4" y="1" width="1" height="1" fill="#9a9a9a"/><rect x="3" y="3" width="1" height="1" fill="#2a2a2a"/><rect x="4" y="4" width="1" height="1" fill="#9a9a9a"/><rect x="6" y="0" width="1" height="1" fill="#2a2a2a"/><rect x="7" y="1" width="1" height="1" fill="#9a9a9a"/><rect x="6" y="3" width="1" height="1" fill="#2a2a2a"/><rect x="7" y="4" width="1" height="1" fill="#9a9a9a"/><rect x="9" y="0" width="1" height="1" fill="#2a2a2a"/><rect x="10" y="1" width="1" height="1" fill="#9a9a9a"/><rect x="9" y="3" width="1" height="1" fill="#2a2a2a"/><rect x="10" y="4" width="1" height="1" fill="#9a9a9a"/></svg>
<svg class="a" style="left:1423px;top:270px" width="14" height="14" viewBox="0 0 14 14"><path d="M7,1L12.8,4V10.5L7,13.5L1.2,10.5V4Z" fill="#3e2a18"/><path d="M7,2.2L11.8,4.6L7,7L2.2,4.6Z" fill="#e2c19a"/><path d="M2.2,5.3L6.5,7.6V12.4L2.2,10.1Z" fill="#cf9152"/><path d="M7.5,7.6L11.8,5.3V10.1L7.5,12.4Z" fill="#a86c35"/><path d="M2.2,4.8L7,7.2L11.5,4.9M7,7.2V12.3" stroke="#fff" stroke-opacity="0.55" stroke-width="0.8" fill="none"/></svg>
<div class="a" style="left:1445px;top:267px;width:186px;height:20px;border:1px solid #1c1c1c;border-radius:4px;background:linear-gradient(#9a9a9a,#b0b0b0);"></div>
<div class="t" style="left:1452px;top:272.6px;font-size:11.3px;color:#000;">muros_principales.003</div>
<div class="a" style="left:1414px;top:295px;width:220px;height:1px;background:#4e4e4e;"></div>
<div class="a" style="left:1414px;top:296px;width:220px;height:1px;background:#8c8c8c;"></div>
<svg class="a" style="left:1422px;top:301px" width="10" height="10" viewBox="0 0 10 10"><path d="M1.5,0.5V9.5L9,5Z" fill="#262626"/></svg>
<div class="t" style="left:1435px;top:299.8px;font-size:12px;color:#000;">Display</div>
<svg class="a" style="left:1617px;top:303px" width="12" height="6" viewBox="0 0 12 6"><rect x="0" y="0" width="1" height="1" fill="#2a2a2a"/><rect x="1" y="1" width="1" height="1" fill="#9a9a9a"/><rect x="0" y="3" width="1" height="1" fill="#2a2a2a"/><rect x="1" y="4" width="1" height="1" fill="#9a9a9a"/><rect x="3" y="0" width="1" height="1" fill="#2a2a2a"/><rect x="4" y="1" width="1" height="1" fill="#9a9a9a"/><rect x="3" y="3" width="1" height="1" fill="#2a2a2a"/><rect x="4" y="4" width="1" height="1" fill="#9a9a9a"/><rect x="6" y="0" width="1" height="1" fill="#2a2a2a"/><rect x="7" y="1" width="1" height="1" fill="#9a9a9a"/><rect x="6" y="3" width="1" height="1" fill="#2a2a2a"/><rect x="7" y="4" width="1" height="1" fill="#9a9a9a"/><rect x="9" y="0" width="1" height="1" fill="#2a2a2a"/><rect x="10" y="1" width="1" height="1" fill="#9a9a9a"/><rect x="9" y="3" width="1" height="1" fill="#2a2a2a"/><rect x="10" y="4" width="1" height="1" fill="#9a9a9a"/></svg>
<div class="a" style="left:1414px;top:317px;width:220px;height:1px;background:#4e4e4e;"></div>
<div class="a" style="left:1414px;top:318px;width:220px;height:1px;background:#8c8c8c;"></div>
<svg class="a" style="left:1422px;top:325px" width="10" height="10" viewBox="0 0 10 10"><path d="M0.5,1.5H9.5L5,9Z" fill="#262626"/></svg>
<div class="t" style="left:1435px;top:323.8px;font-size:12px;color:#000;">Shading</div>
<svg class="a" style="left:1617px;top:327px" width="12" height="6" viewBox="0 0 12 6"><rect x="0" y="0" width="1" height="1" fill="#2a2a2a"/><rect x="1" y="1" width="1" height="1" fill="#9a9a9a"/><rect x="0" y="3" width="1" height="1" fill="#2a2a2a"/><rect x="1" y="4" width="1" height="1" fill="#9a9a9a"/><rect x="3" y="0" width="1" height="1" fill="#2a2a2a"/><rect x="4" y="1" width="1" height="1" fill="#9a9a9a"/><rect x="3" y="3" width="1" height="1" fill="#2a2a2a"/><rect x="4" y="4" width="1" height="1" fill="#9a9a9a"/><rect x="6" y="0" width="1" height="1" fill="#2a2a2a"/><rect x="7" y="1" width="1" height="1" fill="#9a9a9a"/><rect x="6" y="3" width="1" height="1" fill="#2a2a2a"/><rect x="7" y="4" width="1" height="1" fill="#9a9a9a"/><rect x="9" y="0" width="1" height="1" fill="#2a2a2a"/><rect x="10" y="1" width="1" height="1" fill="#9a9a9a"/><rect x="9" y="3" width="1" height="1" fill="#2a2a2a"/><rect x="10" y="4" width="1" height="1" fill="#9a9a9a"/></svg>
<div class="a" style="left:1420px;top:353px;width:14px;height:14px;border:1px solid #1a1a1a;border-radius:3px;background:linear-gradient(#505050,#3e3e3e)"></div>
<div class="t" style="left:1441px;top:355.7px;font-size:11px;color:#000;">Textured Solid</div>
<div class="a" style="left:1420px;top:375px;width:14px;height:14px;border:1px solid #1a1a1a;border-radius:3px;background:linear-gradient(#505050,#3e3e3e)"></div>
<div class="t" style="left:1441px;top:377.9px;font-size:11px;color:#000;">Matcap</div>
<div class="a" style="left:1420px;top:397px;width:14px;height:14px;border:1px solid #1a1a1a;border-radius:3px;background:linear-gradient(#505050,#3e3e3e)"></div>
<div class="t" style="left:1441px;top:399.9px;font-size:11px;color:#000;">Backface Culling</div>
<div class="a" style="left:1420px;top:419px;width:14px;height:14px;border:1px solid #1a1a1a;border-radius:3px;background:linear-gradient(#505050,#3e3e3e)"></div>
<div class="t" style="left:1441px;top:421.9px;font-size:11px;color:#000;">Hidden Wire</div>
<div class="a" style="left:1414px;top:443px;width:220px;height:1px;background:#4e4e4e;"></div>
<div class="a" style="left:1414px;top:444px;width:220px;height:1px;background:#8c8c8c;"></div>
<svg class="a" style="left:1422px;top:450.5px" width="10" height="10" viewBox="0 0 10 10"><path d="M1.5,0.5V9.5L9,5Z" fill="#262626"/></svg>
<div class="a" style="left:1434px;top:449px;width:14px;height:14px;border:1px solid #1a1a1a;border-radius:3px;background:linear-gradient(#505050,#3e3e3e)"></div>
<svg class="a" style="left:1434px;top:448px" width="16" height="16" viewBox="0 0 16 16"><path d="M3.1,5.9L6.8,9.8L13.3,1.4" stroke="#d8d8d8" stroke-width="1.7" fill="none" stroke-linecap="round"/></svg>
<div class="t" style="left:1454px;top:449.7px;font-size:12px;color:#000;">Motion Tracking</div>
<svg class="a" style="left:1617px;top:452.5px" width="12" height="6" viewBox="0 0 12 6"><rect x="0" y="0" width="1" height="1" fill="#2a2a2a"/><rect x="1" y="1" width="1" height="1" fill="#9a9a9a"/><rect x="0" y="3" width="1" height="1" fill="#2a2a2a"/><rect x="1" y="4" width="1" height="1" fill="#9a9a9a"/><rect x="3" y="0" width="1" height="1" fill="#2a2a2a"/><rect x="4" y="1" width="1" height="1" fill="#9a9a9a"/><rect x="3" y="3" width="1" height="1" fill="#2a2a2a"/><rect x="4" y="4" width="1" height="1" fill="#9a9a9a"/><rect x="6" y="0" width="1" height="1" fill="#2a2a2a"/><rect x="7" y="1" width="1" height="1" fill="#9a9a9a"/><rect x="6" y="3" width="1" height="1" fill="#2a2a2a"/><rect x="7" y="4" width="1" height="1" fill="#9a9a9a"/><rect x="9" y="0" width="1" height="1" fill="#2a2a2a"/><rect x="10" y="1" width="1" height="1" fill="#9a9a9a"/><rect x="9" y="3" width="1" height="1" fill="#2a2a2a"/><rect x="10" y="4" width="1" height="1" fill="#9a9a9a"/></svg>
<div class="a" style="left:1414px;top:468px;width:220px;height:1px;background:#4e4e4e;"></div>
<div class="a" style="left:1414px;top:469px;width:220px;height:1px;background:#8c8c8c;"></div>
<svg class="a" style="left:1422px;top:475px" width="10" height="10" viewBox="0 0 10 10"><path d="M0.5,1.5H9.5L5,9Z" fill="#262626"/></svg>
<div class="t" style="left:1435px;top:473.8px;font-size:12px;color:#000;">Mesh Display</div>
<svg class="a" style="left:1617px;top:477px" width="12" height="6" viewBox="0 0 12 6"><rect x="0" y="0" width="1" height="1" fill="#2a2a2a"/><rect x="1" y="1" width="1" height="1" fill="#9a9a9a"/><rect x="0" y="3" width="1" height="1" fill="#2a2a2a"/><rect x="1" y="4" width="1" height="1" fill="#9a9a9a"/><rect x="3" y="0" width="1" height="1" fill="#2a2a2a"/><rect x="4" y="1" width="1" height="1" fill="#9a9a9a"/><rect x="3" y="3" width="1" height="1" fill="#2a2a2a"/><rect x="4" y="4" width="1" height="1" fill="#9a9a9a"/><rect x="6" y="0" width="1" height="1" fill="#2a2a2a"/><rect x="7" y="1" width="1" height="1" fill="#9a9a9a"/><rect x="6" y="3" width="1" height="1" fill="#2a2a2a"/><rect x="7" y="4" width="1" height="1" fill="#9a9a9a"/><rect x="9" y="0" width="1" height="1" fill="#2a2a2a"/><rect x="10" y="1" width="1" height="1" fill="#9a9a9a"/><rect x="9" y="3" width="1" height="1" fill="#2a2a2a"/><rect x="10" y="4" width="1" height="1" fill="#9a9a9a"/></svg>
<div class="t" style="left:1424px;top:506.2px;font-size:11px;color:#000;">Overlays:</div>
<div class="a" style="left:1420px;top:525px;width:14px;height:14px;border:1px solid #1a1a1a;border-radius:3px;background:linear-gradient(#505050,#3e3e3e)"></div>
<svg class="a" style="left:1420px;top:524px" width="16" height="16" viewBox="0 0 16 16"><path d="M3.1,5.9L6.8,9.8L13.3,1.4" stroke="#d8d8d8" stroke-width="1.7" fill="none" stroke-linecap="round"/></svg>
<div class="t" style="left:1441px;top:527.7px;font-size:11px;color:#fff;">Faces</div>
<div class="a" style="left:1531px;top:525px;width:14px;height:14px;border:1px solid #1a1a1a;border-radius:3px;background:linear-gradient(#505050,#3e3e3e)"></div>
<svg class="a" style="left:1531px;top:524px" width="16" height="16" viewBox="0 0 16 16"><path d="M3.1,5.9L6.8,9.8L13.3,1.4" stroke="#d8d8d8" stroke-width="1.7" fill="none" stroke-linecap="round"/></svg>
<div class="t" style="left:1552px;top:527.7px;font-size:11px;color:#fff;">Sharp</div>
<div class="a" style="left:1420px;top:547px;width:14px;height:14px;border:1px solid #1a1a1a;border-radius:3px;background:linear-gradient(#505050,#3e3e3e)"></div>
<svg class="a" style="left:1420px;top:546px" width="16" height="16" viewBox="0 0 16 16"><path d="M3.1,5.9L6.8,9.8L13.3,1.4" stroke="#d8d8d8" stroke-width="1.7" fill="none" stroke-linecap="round"/></svg>
<div class="t" style="left:1441px;top:549.7px;font-size:11px;color:#fff;">Edges</div>
<div class="a" style="left:1531px;top:547px;width:14px;height:14px;border:1px solid #1a1a1a;border-radius:3px;background:linear-gradient(#505050,#3e3e3e)"></div>
<div class="t" style="left:1552px;top:549.7px;font-size:11px;color:#000;">Bevel</div>
<div class="a" style="left:1420px;top:569px;width:14px;height:14px;border:1px solid #1a1a1a;border-radius:3px;background:linear-gradient(#505050,#3e3e3e)"></div>
<svg class="a" style="left:1420px;top:568px" width="16" height="16" viewBox="0 0 16 16"><path d="M3.1,5.9L6.8,9.8L13.3,1.4" stroke="#d8d8d8" stroke-width="1.7" fill="none" stroke-linecap="round"/></svg>
<div class="t" style="left:1441px;top:571.7px;font-size:11px;color:#fff;">Creases</div>
<div class="a" style="left:1531px;top:569px;width:14px;height:14px;border:1px solid #1a1a1a;border-radius:3px;background:linear-gradient(#505050,#3e3e3e)"></div>
<div class="t" style="left:1552px;top:571.7px;font-size:11px;color:#000;">Edge Marks</div>
<div class="a" style="left:1420px;top:591px;width:14px;height:14px;border:1px solid #1a1a1a;border-radius:3px;background:linear-gradient(#505050,#3e3e3e)"></div>
<div class="t" style="left:1441px;top:593.7px;font-size:11px;color:#000;">Seams</div>
<div class="a" style="left:1531px;top:591px;width:14px;height:14px;border:1px solid #1a1a1a;border-radius:3px;background:linear-gradient(#505050,#3e3e3e)"></div>
<div class="t" style="left:1552px;top:593.7px;font-size:11px;color:#000;">Face Marks</div>
<div class="a" style="left:1420px;top:616px;width:14px;height:14px;border:1px solid #1a1a1a;border-radius:3px;background:linear-gradient(#505050,#3e3e3e)"></div>
<div class="t" style="left:1441px;top:619.2px;font-size:11px;color:#000;">Show Weights</div>
<div class="t" style="left:1424px;top:652.2px;font-size:11px;color:#000;">Normals:</div>
<div class="a" style="left:1417px;top:668px;width:214px;height:20px;border:1px solid #2a2a2a;border-radius:9px 9px 9px 9px;overflow:hidden;background:#2a2a2a"><div class="a" style="left:0;top:0;width:18px;height:18px;background:linear-gradient(#a2a2a2,#939393)"></div><div class="a" style="left:19px;top:0;width:19px;height:18px;background:linear-gradient(#a2a2a2,#939393)"></div><div class="a" style="left:39px;top:0;width:19px;height:18px;background:linear-gradient(#a2a2a2,#939393)"></div><div class="a" style="left:59px;top:0;width:153px;height:18px;background:linear-gradient(#939393,#a0a0a0)"></div></div>
<svg class="a" style="left:1420px;top:671px" width="14" height="14" viewBox="0 0 14 14"><path d="M7,1L12.8,4V10.5L7,13.5L1.2,10.5V4Z" fill="#3a3a3a"/><path d="M7,2.2L11.8,4.6L7,7L2.2,4.6Z" fill="#e4e4e4"/><path d="M2.2,5.3L6.5,7.6V12.4L2.2,10.1Z" fill="#d8d8d8"/><path d="M7.5,7.6L11.8,5.3V10.1L7.5,12.4Z" fill="#a8a8a8"/><circle cx="2.8" cy="3.2" r="2" fill="#ffae50" stroke="#6a3a10" stroke-width="0.8"/></svg>
<svg class="a" style="left:1439px;top:671px" width="14" height="14" viewBox="0 0 14 14"><path d="M7,1L12.8,4V10.5L7,13.5L1.2,10.5V4Z" fill="#3a3a3a"/><path d="M7,2.2L11.8,4.6L7,7L2.2,4.6Z" fill="#e4e4e4"/><path d="M2.2,5.3L6.5,7.6V12.4L2.2,10.1Z" fill="#f0d8a8"/><path d="M7.5,7.6L11.8,5.3V10.1L7.5,12.4Z" fill="#a8a8a8"/><circle cx="2.8" cy="3.2" r="2" fill="#ffae50" stroke="#6a3a10" stroke-width="0.8"/></svg>
<svg class="a" style="left:1459px;top:671px" width="14" height="14" viewBox="0 0 14 14"><path d="M7,1L12.8,4V10.5L7,13.5L1.2,10.5V4Z" fill="#3a3a3a"/><path d="M7,2.2L11.8,4.6L7,7L2.2,4.6Z" fill="#e4e4e4"/><path d="M2.2,5.3L6.5,7.6V12.4L2.2,10.1Z" fill="#ffb060"/><path d="M7.5,7.6L11.8,5.3V10.1L7.5,12.4Z" fill="#a8a8a8"/></svg>
<svg class="a" style="left:1482px;top:673.5px" width="5" height="8" viewBox="0 0 5 8"><path d="M4.5,0.5V7.5L0.5,4Z" fill="#6a6a6a"/></svg>
<svg class="a" style="left:1620px;top:673.5px" width="5" height="8" viewBox="0 0 5 8"><path d="M0.5,0.5V7.5L4.5,4Z" fill="#6a6a6a"/></svg>
<div class="t" style="left:1491px;top:673.2px;font-size:11px;color:#4a4a4a;">Size:</div>
<div class="t" style="right:306px;top:673.0px;font-size:11.5px;color:#4a4a4a;">10cm</div>
<div class="t" style="left:1424px;top:707.2px;font-size:11px;color:#000;">Edge Info:</div>
<div class="t" style="left:1535px;top:707.2px;font-size:11px;color:#000;">Face Info:</div>
<div class="a" style="left:1420px;top:726px;width:14px;height:14px;border:1px solid #1a1a1a;border-radius:3px;background:linear-gradient(#505050,#3e3e3e)"></div>
<div class="t" style="left:1441px;top:729.2px;font-size:11px;color:#000;">Length</div>
<div class="a" style="left:1531px;top:726px;width:14px;height:14px;border:1px solid #1a1a1a;border-radius:3px;background:linear-gradient(#505050,#3e3e3e)"></div>
<div class="t" style="left:1552px;top:729.2px;font-size:11px;color:#000;">Area</div>
<div class="a" style="left:1420px;top:748px;width:14px;height:14px;border:1px solid #1a1a1a;border-radius:3px;background:linear-gradient(#505050,#3e3e3e)"></div>
<div class="t" style="left:1441px;top:751.2px;font-size:11px;color:#000;">Angle</div>
<div class="a" style="left:1531px;top:748px;width:14px;height:14px;border:1px solid #1a1a1a;border-radius:3px;background:linear-gradient(#505050,#3e3e3e)"></div>
<div class="t" style="left:1552px;top:751.2px;font-size:11px;color:#000;">Angle</div>
<div class="a" style="left:1414px;top:772px;width:220px;height:1px;background:#4e4e4e;"></div>
<div class="a" style="left:1414px;top:773px;width:220px;height:1px;background:#8c8c8c;"></div>
<svg class="a" style="left:1422px;top:780px" width="10" height="10" viewBox="0 0 10 10"><path d="M0.5,1.5H9.5L5,9Z" fill="#262626"/></svg>
<div class="a" style="left:1434px;top:777px;width:14px;height:14px;border:1px solid #1a1a1a;border-radius:3px;background:linear-gradient(#505050,#3e3e3e)"></div>
<div class="t" style="left:1454px;top:778.7px;font-size:12px;color:#000;">Mesh Analysis</div>
<svg class="a" style="left:1617px;top:782px" width="12" height="6" viewBox="0 0 12 6"><rect x="0" y="0" width="1" height="1" fill="#2a2a2a"/><rect x="1" y="1" width="1" height="1" fill="#9a9a9a"/><rect x="0" y="3" width="1" height="1" fill="#2a2a2a"/><rect x="1" y="4" width="1" height="1" fill="#9a9a9a"/><rect x="3" y="0" width="1" height="1" fill="#2a2a2a"/><rect x="4" y="1" width="1" height="1" fill="#9a9a9a"/><rect x="3" y="3" width="1" height="1" fill="#2a2a2a"/><rect x="4" y="4" width="1" height="1" fill="#9a9a9a"/><rect x="6" y="0" width="1" height="1" fill="#2a2a2a"/><rect x="7" y="1" width="1" height="1" fill="#9a9a9a"/><rect x="6" y="3" width="1" height="1" fill="#2a2a2a"/><rect x="7" y="4" width="1" height="1" fill="#9a9a9a"/><rect x="9" y="0" width="1" height="1" fill="#2a2a2a"/><rect x="10" y="1" width="1" height="1" fill="#9a9a9a"/><rect x="9" y="3" width="1" height="1" fill="#2a2a2a"/><rect x="10" y="4" width="1" height="1" fill="#9a9a9a"/></svg>
<div class="t" style="left:1424px;top:811.2px;font-size:11px;color:#4e4e4e;">Type:</div>
<div class="a" style="left:1492px;top:805px;width:139px;height:20px;border:1px solid #3a3a3a;border-radius:4px;background:linear-gradient(#5c5c5c,#4c4c4c)"></div>
<div class="t" style="left:1499px;top:810.7px;font-size:11px;color:#bcbcbc;">Overhang</div>
<svg class="a" style="left:1620px;top:808.0px" width="8" height="14" viewBox="0 0 8 14"><path d="M1,5.5L4,1.5L7,5.5ZM1,8.5L4,12.5L7,8.5Z" fill="#bbb" opacity="0.9"/></svg>
<div class="a" style="left:1417px;top:830px;width:214px;height:20px;border:1px solid #3c3c3c;border-radius:9px;overflow:hidden;background:#3c3c3c"><div class="a" style="left:0;top:0;width:105px;height:18px;background:linear-gradient(#8c8c8c,#989898)"></div><div class="a" style="left:106px;top:0;width:106px;height:18px;background:linear-gradient(#8c8c8c,#989898)"></div></div>
<svg class="a" style="left:1424px;top:836px" width="5" height="8" viewBox="0 0 5 8"><path d="M4.5,0.5V7.5L0.5,4Z" fill="#7a7a7a"/></svg>
<svg class="a" style="left:1515px;top:836px" width="5" height="8" viewBox="0 0 5 8"><path d="M0.5,0.5V7.5L4.5,4Z" fill="#7a7a7a"/></svg>
<svg class="a" style="left:1530px;top:836px" width="5" height="8" viewBox="0 0 5 8"><path d="M4.5,0.5V7.5L0.5,4Z" fill="#7a7a7a"/></svg>
<svg class="a" style="left:1622px;top:836px" width="5" height="8" viewBox="0 0 5 8"><path d="M0.5,0.5V7.5L4.5,4Z" fill="#7a7a7a"/></svg>
<div class="t" style="right:412px;top:835.5px;font-size:11.5px;color:#555;">0°</div>
<div class="t" style="right:306px;top:835.5px;font-size:11.5px;color:#555;">45°</div>
<div class="a" style="left:1417px;top:855px;width:214px;height:20px;border:1px solid #3a3a3a;border-radius:4px;overflow:hidden;background:#3a3a3a">
<div class="a" style="left:0px;top:0;width:34px;height:18px;background:linear-gradient(#5a5a5a,#4a4a4a);text-align:center;line-height:19px;font-size:11.5px;color:#c8c8c8">+X</div>
<div class="a" style="left:35px;top:0;width:34px;height:18px;background:linear-gradient(#5a5a5a,#4a4a4a);text-align:center;line-height:19px;font-size:11.5px;color:#c8c8c8">+Y</div>
<div class="a" style="left:70px;top:0;width:34px;height:18px;background:linear-gradient(#5a5a5a,#4a4a4a);text-align:center;line-height:19px;font-size:11.5px;color:#c8c8c8">+Z</div>
<div class="a" style="left:105px;top:0;width:34px;height:18px;background:linear-gradient(#5a5a5a,#4a4a4a);text-align:center;line-height:19px;font-size:11.5px;color:#c8c8c8">-X</div>
<div class="a" style="left:140px;top:0;width:34px;height:18px;background:linear-gradient(#5a5a5a,#4a4a4a);text-align:center;line-height:19px;font-size:11.5px;color:#c8c8c8">-Y</div>
<div class="a" style="left:175px;top:0;width:37px;height:18px;background:linear-gradient(#6c88b6,#6282b0);text-align:center;line-height:19px;font-size:11.5px;color:#2c3a50">-Z</div>
</div>
<div class="a" style="left:1414px;top:882px;width:220px;height:1px;background:#4e4e4e;"></div>
<div class="a" style="left:1414px;top:883px;width:220px;height:1px;background:#8c8c8c;"></div>
<svg class="a" style="left:1422px;top:890px" width="10" height="10" viewBox="0 0 10 10"><path d="M1.5,0.5V9.5L9,5Z" fill="#262626"/></svg>
<div class="a" style="left:1434px;top:887px;width:14px;height:14px;border:1px solid #1a1a1a;border-radius:3px;background:linear-gradient(#505050,#3e3e3e)"></div>
<div class="t" style="left:1454px;top:888.7px;font-size:12px;color:#000;">Background Images</div>
<svg class="a" style="left:1617px;top:892px" width="12" height="6" viewBox="0 0 12 6"><rect x="0" y="0" width="1" height="1" fill="#2a2a2a"/><rect x="1" y="1" width="1" height="1" fill="#9a9a9a"/><rect x="0" y="3" width="1" height="1" fill="#2a2a2a"/><rect x="1" y="4" width="1" height="1" fill="#9a9a9a"/><rect x="3" y="0" width="1" height="1" fill="#2a2a2a"/><rect x="4" y="1" width="1" height="1" fill="#9a9a9a"/><rect x="3" y="3" width="1" height="1" fill="#2a2a2a"/><rect x="4" y="4" width="1" height="1" fill="#9a9a9a"/><rect x="6" y="0" width="1" height="1" fill="#2a2a2a"/><rect x="7" y="1" width="1" height="1" fill="#9a9a9a"/><rect x="6" y="3" width="1" height="1" fill="#2a2a2a"/><rect x="7" y="4" width="1" height="1" fill="#9a9a9a"/><rect x="9" y="0" width="1" height="1" fill="#2a2a2a"/><rect x="10" y="1" width="1" height="1" fill="#9a9a9a"/><rect x="9" y="3" width="1" height="1" fill="#2a2a2a"/><rect x="10" y="4" width="1" height="1" fill="#9a9a9a"/></svg>
<div class="a" style="left:1414px;top:907px;width:220px;height:1px;background:#4e4e4e;"></div>
<div class="a" style="left:1414px;top:908px;width:220px;height:1px;background:#8c8c8c;"></div>
<svg class="a" style="left:1422px;top:913.5px" width="10" height="10" viewBox="0 0 10 10"><path d="M1.5,0.5V9.5L9,5Z" fill="#262626"/></svg>
<div class="t" style="left:1435px;top:912.3px;font-size:12px;color:#000;">Transform Orientations</div>
<svg class="a" style="left:1617px;top:915.5px" width="12" height="6" viewBox="0 0 12 6"><rect x="0" y="0" width="1" height="1" fill="#2a2a2a"/><rect x="1" y="1" width="1" height="1" fill="#9a9a9a"/><rect x="0" y="3" width="1" height="1" fill="#2a2a2a"/><rect x="1" y="4" width="1" height="1" fill="#9a9a9a"/><rect x="3" y="0" width="1" height="1" fill="#2a2a2a"/><rect x="4" y="1" width="1" height="1" fill="#9a9a9a"/><rect x="3" y="3" width="1" height="1" fill="#2a2a2a"/><rect x="4" y="4" width="1" height="1" fill="#9a9a9a"/><rect x="6" y="0" width="1" height="1" fill="#2a2a2a"/><rect x="7" y="1" width="1" height="1" fill="#9a9a9a"/><rect x="6" y="3" width="1" height="1" fill="#2a2a2a"/><rect x="7" y="4" width="1" height="1" fill="#9a9a9a"/><rect x="9" y="0" width="1" height="1" fill="#2a2a2a"/><rect x="10" y="1" width="1" height="1" fill="#9a9a9a"/><rect x="9" y="3" width="1" height="1" fill="#2a2a2a"/><rect x="10" y="4" width="1" height="1" fill="#9a9a9a"/></svg>
<div class="a" style="left:1414px;top:930px;width:220px;height:1px;background:#4e4e4e;"></div>
<div class="a" style="left:1414px;top:931px;width:220px;height:1px;background:#8c8c8c;"></div>
<svg class="a" style="left:1422px;top:938px" width="10" height="10" viewBox="0 0 10 10"><path d="M1.5,0.5V9.5L9,5Z" fill="#262626"/></svg>
<div class="t" style="left:1435px;top:936.8px;font-size:12px;color:#000;">Properties</div>
<svg class="a" style="left:1617px;top:940px" width="12" height="6" viewBox="0 0 12 6"><rect x="0" y="0" width="1" height="1" fill="#2a2a2a"/><rect x="1" y="1" width="1" height="1" fill="#9a9a9a"/><rect x="0" y="3" width="1" height="1" fill="#2a2a2a"/><rect x="1" y="4" width="1" height="1" fill="#9a9a9a"/><rect x="3" y="0" width="1" height="1" fill="#2a2a2a"/><rect x="4" y="1" width="1" height="1" fill="#9a9a9a"/><rect x="3" y="3" width="1" height="1" fill="#2a2a2a"/><rect x="4" y="4" width="1" height="1" fill="#9a9a9a"/><rect x="6" y="0" width="1" height="1" fill="#2a2a2a"/><rect x="7" y="1" width="1" height="1" fill="#9a9a9a"/><rect x="6" y="3" width="1" height="1" fill="#2a2a2a"/><rect x="7" y="4" width="1" height="1" fill="#9a9a9a"/><rect x="9" y="0" width="1" height="1" fill="#2a2a2a"/><rect x="10" y="1" width="1" height="1" fill="#9a9a9a"/><rect x="9" y="3" width="1" height="1" fill="#2a2a2a"/><rect x="10" y="4" width="1" height="1" fill="#9a9a9a"/></svg>
<div class="a" style="left:1639px;top:61px;width:13px;height:941px;border-radius:6px;background:#595959;border:1px solid #525252"></div>
<div class="a" style="left:1640px;top:324px;width:11px;height:677px;border-radius:6px;background:linear-gradient(90deg,#9c9c9c,#7e7e7e);border:1px solid #555"></div>
<div class="a" style="left:1656px;top:56px;width:264px;height:620px;background:#727272;border-left:1px solid #111"></div>
<div class="a" style="left:1657px;top:83px;width:263px;height:1px;background:#7e7e7e"></div>
<div class="a" style="left:1657px;top:82px;width:263px;height:1px;background:#666"></div>
<div class="a" style="left:1665px;top:60px;width:30px;height:20px;border:1px solid #222;border-radius:5px;background:linear-gradient(#505050,#3a3a3a);"></div>
<svg class="a" style="left:1669px;top:63px" width="14" height="14" viewBox="0 0 14 14"><rect x="1" y="1.5" width="11" height="4" rx="2" fill="#fff" stroke="#111" stroke-width="0.9"/><rect x="1" y="1.5" width="6" height="4" rx="2" fill="#777"/><rect x="1" y="8" width="11" height="4.5" rx="2.2" fill="#fff" stroke="#111" stroke-width="0.9"/><path d="M3.5,10.2L5,9V11.5ZM9.5,10.2L8,9V11.5Z" fill="#111"/></svg>
<svg class="a" style="left:1684px;top:63px" width="8" height="14" viewBox="0 0 8 14"><path d="M1,5.5L4,1.5L7,5.5ZM1,8.5L4,12.5L7,8.5Z" fill="#bdbdbd"/></svg>
<div class="a" style="left:1703px;top:60px;width:220px;height:20px;border:1px solid #222;border-radius:5px;overflow:hidden;background:#222"><div class="a" style="left:0px;top:0;width:19px;height:18px;background:linear-gradient(#505050,#3a3a3a)"></div><div class="a" style="left:20px;top:0;width:19px;height:18px;background:linear-gradient(#505050,#3a3a3a)"></div><div class="a" style="left:40px;top:0;width:19px;height:18px;background:linear-gradient(#505050,#3a3a3a)"></div><div class="a" style="left:60px;top:0;width:19px;height:18px;background:linear-gradient(#505050,#3a3a3a)"></div><div class="a" style="left:80px;top:0;width:19px;height:18px;background:linear-gradient(#505050,#3a3a3a)"></div><div class="a" style="left:100px;top:0;width:19px;height:18px;background:linear-gradient(#505050,#3a3a3a)"></div><div class="a" style="left:120px;top:0;width:19px;height:18px;background:linear-gradient(#6a94d4,#4a76b8)"></div><div class="a" style="left:140px;top:0;width:19px;height:18px;background:linear-gradient(#505050,#3a3a3a)"></div><div class="a" style="left:160px;top:0;width:19px;height:18px;background:linear-gradient(#505050,#3a3a3a)"></div><div class="a" style="left:180px;top:0;width:19px;height:18px;background:linear-gradient(#505050,#3a3a3a)"></div><div class="a" style="left:200px;top:0;width:19px;height:18px;background:linear-gradient(#505050,#3a3a3a)"></div></div>
<svg class="a" style="left:1706px;top:63px" width="14" height="14" viewBox="0 0 14 14"><rect x="1" y="4" width="12" height="8.5" rx="1" fill="#666" stroke="#111" stroke-width="0.8"/><rect x="1.5" y="4.5" width="11" height="2.5" fill="#ccc"/><circle cx="8" cy="8.5" r="3" fill="#333" stroke="#bbb" stroke-width="0.8"/><circle cx="8" cy="8.5" r="1.3" fill="#8a3a3a"/><rect x="2" y="2.5" width="3" height="1.5" fill="#999"/><circle cx="3" cy="5.5" r="0.7" fill="#e03030"/></svg>
<svg class="a" style="left:1726px;top:63px" width="14" height="14" viewBox="0 0 14 14"><rect x="3" y="4" width="9" height="9" fill="#bbb" stroke="#444" stroke-width="0.8" transform="rotate(10 7 8)"/><rect x="1" y="1" width="9" height="9" fill="#ddd" stroke="#333" stroke-width="0.8"/><rect x="5" y="2" width="3" height="5" rx="1" fill="#4a7ad0"/><circle cx="4" cy="7" r="2" fill="#ccc" stroke="#222" stroke-width="0.6"/></svg>
<svg class="a" style="left:1746px;top:63px" width="14" height="14" viewBox="0 0 14 14"><circle cx="3" cy="2.5" r="2" fill="#e8e860" opacity="0.7"/><circle cx="3" cy="2.5" r="1" fill="#ffffc0"/><rect x="7.2" y="1.5" width="5" height="10" rx="2" fill="#4a7ad0" stroke="#112244" stroke-width="0.8"/><rect x="8.2" y="2.5" width="2" height="7" fill="#a8c4f0"/><circle cx="5" cy="10" r="3.3" fill="#ddd" stroke="#111" stroke-width="0.8"/></svg>
<svg class="a" style="left:1766px;top:63px" width="14" height="14" viewBox="0 0 14 14"><circle cx="7" cy="7" r="6" fill="#4a7ab8" stroke="#222" stroke-width="0.9"/><path d="M3,4C5,3 6,5 5,7S3,9 2.5,8ZM8,3C10,4 12,6 11,9S8,10 8,8S9,5 8,3Z" fill="#5a9a4a"/></svg>
<svg class="a" style="left:1786px;top:63px" width="14" height="14" viewBox="0 0 14 14"><path d="M7,1L12.8,4V10.5L7,13.5L1.2,10.5V4Z" fill="#3a2a1a"/><path d="M7,2.2L11.8,4.6L7,7L2.2,4.6Z" fill="#d6b690"/><path d="M2.2,5.3L6.5,7.6V12.4L2.2,10.1Z" fill="#c08850"/><path d="M7.5,7.6L11.8,5.3V10.1L7.5,12.4Z" fill="#9a6a40"/><path d="M2.2,4.8L7,7.2L11.5,4.9M7,7.2V12.3" stroke="#fff" stroke-opacity="0.55" stroke-width="0.8" fill="none"/></svg>
<svg class="a" style="left:1806px;top:63px" width="14" height="14" viewBox="0 0 14 14"><path d="M2,9L5,6A2,2 0 0 1 8,9L5,12A2,2 0 0 1 2,9ZM6,5L9,2A2,2 0 0 1 12,5L9,8A2,2 0 0 1 6,5Z" fill="none" stroke="#222" stroke-width="2.6"/><path d="M2,9L5,6A2,2 0 0 1 8,9L5,12A2,2 0 0 1 2,9ZM6,5L9,2A2,2 0 0 1 12,5L9,8A2,2 0 0 1 6,5Z" fill="none" stroke="#bbb" stroke-width="1.3"/></svg>
<svg class="a" style="left:1826px;top:63px" width="14" height="14" viewBox="0 0 14 14"><path d="M2,12.5L7.5,7A3,3 0 0 0 11.5,2.5L10,4.5L9,4.2L8.8,3L10.5,1.5A3.2,3.2 0 0 0 6.5,6L1,11.5Z" fill="#ddd" stroke="#1a2a44" stroke-width="0.9"/></svg>
<svg class="a" style="left:1846px;top:63px" width="14" height="14" viewBox="0 0 14 14"><path d="M2,3H12L7,12Z" fill="none" stroke="#222" stroke-width="0.9"/><g fill="#ddd" stroke="#111" stroke-width="0.8"><circle cx="2" cy="3" r="1.5"/><circle cx="12" cy="3" r="1.5"/><circle cx="7" cy="12" r="1.5"/></g></svg>
<svg class="a" style="left:1866px;top:63px" width="14" height="14" viewBox="0 0 14 14"><defs><linearGradient id="mt" x1="0" y1="0" x2="1" y2="1"><stop offset="0" stop-color="#ddd"/><stop offset="0.5" stop-color="#777"/><stop offset="1" stop-color="#b09080"/></linearGradient></defs><circle cx="7" cy="7" r="6" fill="url(#mt)" stroke="#333" stroke-width="0.6"/></svg>
<svg class="a" style="left:1886px;top:63px" width="14" height="14" viewBox="0 0 14 14"><rect x="1.5" y="1.5" width="11" height="11" fill="#ddd" stroke="#333" stroke-width="0.8"/><g fill="#a02828"><rect x="2" y="2" width="2.5" height="2.5"/><rect x="7" y="2" width="2.5" height="2.5"/><rect x="4.5" y="4.5" width="2.5" height="2.5"/><rect x="9.5" y="4.5" width="2.5" height="2.5"/><rect x="2" y="7" width="2.5" height="2.5"/><rect x="7" y="7" width="2.5" height="2.5"/><rect x="4.5" y="9.5" width="2.5" height="2.5"/><rect x="9.5" y="9.5" width="2.5" height="2.5"/></g></svg>
<svg class="a" style="left:1906px;top:63px" width="14" height="14" viewBox="0 0 14 14"><path d="M4,1V8M0.5,4.5H7.5M10,6V13M6.5,9.5H13.5M11,0V5M8.5,2.5H13.5" stroke="#e8e0a0" stroke-width="1.1"/></svg>
<svg class="a" style="left:1667px;top:93px" width="16" height="16" viewBox="0 0 16 16"><path d="M2,14L7,9" stroke="#222" stroke-width="2.4"/><path d="M2,14L7,9" stroke="#ddd" stroke-width="1"/><path d="M5,7L9,11L10,9.5L8.5,8L12,4.5L13.5,5L14,4L10,0.5L9.5,1.5L10.5,3L7,6.5L5.5,5.5Z" fill="#ddd" stroke="#222" stroke-width="0.9"/></svg>
<svg class="a" style="left:1690px;top:93px" width="14" height="14" viewBox="0 0 14 14"><circle cx="3" cy="2.5" r="2" fill="#e8e860" opacity="0.7"/><circle cx="3" cy="2.5" r="1" fill="#ffffc0"/><rect x="7.2" y="1.5" width="5" height="10" rx="2" fill="#4a7ad0" stroke="#112244" stroke-width="0.8"/><rect x="8.2" y="2.5" width="2" height="7" fill="#a8c4f0"/><circle cx="5" cy="10" r="3.3" fill="#ddd" stroke="#111" stroke-width="0.8"/></svg>
<svg class="a" style="left:1710px;top:96px" width="6" height="8" viewBox="0 0 6 8"><path d="M1,0.5V7.5L5,4Z" fill="#3a3a3a"/></svg>
<svg class="a" style="left:1731px;top:93px" width="14" height="14" viewBox="0 0 14 14"><path d="M7,1L12.8,4V10.5L7,13.5L1.2,10.5V4Z" fill="#3e2a18"/><path d="M7,2.2L11.8,4.6L7,7L2.2,4.6Z" fill="#e2c19a"/><path d="M2.2,5.3L6.5,7.6V12.4L2.2,10.1Z" fill="#cf9152"/><path d="M7.5,7.6L11.8,5.3V10.1L7.5,12.4Z" fill="#a86c35"/><path d="M2.2,4.8L7,7.2L11.5,4.9M7,7.2V12.3" stroke="#fff" stroke-opacity="0.55" stroke-width="0.8" fill="none"/></svg>
<div class="t" style="left:1749px;top:95.5px;font-size:11.3px;color:#000;">muros_principales.003</div>
<div class="a" style="left:1665px;top:126px;width:247px;height:20px;border:1px solid #1c1c1c;border-radius:5px;background:linear-gradient(#565656,#363636);"></div>
<div class="t" style="left:1672px;top:131.7px;font-size:11px;color:#fff;">Add Modifier</div>
<svg class="a" style="left:1900px;top:129px" width="8" height="14" viewBox="0 0 8 14"><path d="M1,5.5L4,1.5L7,5.5ZM1,8.5L4,12.5L7,8.5Z" fill="#ddd"/></svg>
<svg class="a" style="left:1906px;top:57px" width="14" height="14" viewBox="0 0 14 14"><path d="M3,0L14,11M7,0L14,7M11,0L14,3" stroke="#333" stroke-width="1"/><path d="M4,0L14,10M8,0L14,6" stroke="#999" stroke-width="0.7"/></svg>
<div class="a" style="left:1656px;top:676px;width:264px;height:330px;background:#393939;border-left:1px solid #111;border-top:1px solid #111"></div>
<svg class="a" style="left:1657px;top:677px" width="263" height="329" viewBox="1657 677 263 329"><g stroke="#414141" stroke-width="1"><path d="M1692,677V1006"/><path d="M1731.5,677V1006"/><path d="M1771,677V1006"/><path d="M1810.5,677V1006"/><path d="M1850,677V1006"/><path d="M1889.5,677V1006"/><path d="M1657,701H1920"/><path d="M1657,740.5H1920"/><path d="M1657,780H1920"/><path d="M1657,819.5H1920"/><path d="M1657,859H1920"/><path d="M1657,898.5H1920"/><path d="M1657,938H1920"/><path d="M1657,977.5H1920"/></g></svg>
<div class="t" style="left:1677px;top:689.2px;font-size:11px;color:#fff;">Back Ortho</div>
<div class="t" style="left:1677px;top:708.7px;font-size:11px;color:#fff;">Meters</div>
<svg class="a" style="left:1658px;top:700px" width="12" height="12" viewBox="0 0 12 12"><rect x="0.5" y="0.5" width="11" height="11" rx="2" fill="#444"/><path d="M6,3V9M3,6H9" stroke="#999" stroke-width="1.2"/></svg>
<svg class="a" style="left:1905px;top:700px" width="12" height="12" viewBox="0 0 12 12"><rect x="0.5" y="0.5" width="11" height="11" rx="2" fill="#444"/><path d="M6,3V9M3,6H9" stroke="#999" stroke-width="1.2"/></svg>
<svg class="a" style="left:1655px;top:945px" width="40" height="40" viewBox="0 0 40 40"><path d="M28,9V35" stroke="#1020d0" stroke-width="2"/><path d="M4,35H28" stroke="#d01010" stroke-width="2"/><text x="30" y="8" font-size="9" fill="#2040e0" font-family="Liberation Sans">z</text><text x="4" y="30" font-size="9" fill="#e02020" font-family="Liberation Sans">x</text></svg>
<div class="t" style="left:1727px;top:987.1px;font-size:11.2px;color:#fff;">(5) muros_principales.003</div>
<div class="a" style="left:0px;top:1006px;width:1920px;height:26px;background:linear-gradient(#7c7c7c 0,#727272 2px);border-top:1px solid #111"></div>
<div class="a" style="left:1656px;top:1006px;width:1px;height:26px;background:#111"></div>
<div class="a" style="left:9px;top:1009px;width:30px;height:20px;border:1px solid #222;border-radius:5px;background:linear-gradient(#505050,#3a3a3a);"></div>
<svg class="a" style="left:14px;top:1012px" width="14" height="14" viewBox="0 0 14 14"><path d="M7,1L12.5,3V10L7,13L1.5,10V3Z" fill="#fff" stroke="#111" stroke-width="1"/><path d="M7,4.5L12.5,3V10L7,13Z" fill="#888"/><path d="M1.5,3L7,4.5L12.5,3" stroke="#bbb" stroke-width="0.6" fill="none"/><path d="M1.5,3.2V10L7,13V4.5Z" fill="#ddd"/></svg>
<svg class="a" style="left:28px;top:1012px" width="8" height="14" viewBox="0 0 8 14"><path d="M1,5.5L4,1.5L7,5.5ZM1,8.5L4,12.5L7,8.5Z" fill="#bdbdbd"/></svg>
<div class="t" style="left:52px;top:1015.2px;font-size:11px;color:#000;">View</div>
<div class="t" style="left:96px;top:1015.2px;font-size:11px;color:#000;">Select</div>
<div class="t" style="left:147px;top:1015.2px;font-size:11px;color:#000;">Add</div>
<div class="t" style="left:186px;top:1015.2px;font-size:11px;color:#000;">Mesh</div>
<div class="a" style="left:225px;top:1009px;width:99px;height:20px;border:1px solid #222;border-radius:5px;background:linear-gradient(#505050,#3a3a3a);"></div>
<svg class="a" style="left:229px;top:1011px" width="16" height="16" viewBox="0 0 16 16"><path d="M8,2L13,4V11L8,14L3,11V4Z" fill="#bbb" stroke="#444" stroke-width="0.8"/><g fill="#fff" stroke="#c06000" stroke-width="1"><rect x="1.5" y="1.5" width="2.5" height="2.5"/><rect x="7.5" y="4" width="2.5" height="2.5"/><rect x="1.5" y="9.5" width="2.5" height="2.5"/><rect x="7.5" y="12" width="2.5" height="2.5"/></g></svg>
<div class="t" style="left:249px;top:1015.2px;font-size:11px;color:#fff;">Edit Mode</div>
<svg class="a" style="left:313px;top:1012px" width="8" height="14" viewBox="0 0 8 14"><path d="M1,5.5L4,1.5L7,5.5ZM1,8.5L4,12.5L7,8.5Z" fill="#bbb"/></svg>
<div class="a" style="left:329px;top:1009px;width:35px;height:20px;border:1px solid #222;border-radius:5px;background:linear-gradient(#505050,#3a3a3a);"></div>
<svg class="a" style="left:334px;top:1012px" width="14" height="14" viewBox="0 0 14 14"><defs><radialGradient id="sp" cx="0.4" cy="0.35" r="0.7"><stop offset="0" stop-color="#fff"/><stop offset="1" stop-color="#aaa"/></radialGradient></defs><circle cx="7" cy="7" r="6" fill="url(#sp)" stroke="#111" stroke-width="1"/></svg>
<svg class="a" style="left:352px;top:1012px" width="8" height="14" viewBox="0 0 8 14"><path d="M1,5.5L4,1.5L7,5.5ZM1,8.5L4,12.5L7,8.5Z" fill="#bbb"/></svg>
<div class="a" style="left:369px;top:1009px;width:35px;height:20px;border:1px solid #222;border-radius:5px;background:linear-gradient(#505050,#3a3a3a);"></div>
<svg class="a" style="left:373px;top:1011px" width="16" height="16" viewBox="0 0 16 16"><circle cx="5" cy="5" r="3.8" fill="#ddd" stroke="#111" stroke-width="0.8"/><circle cx="10" cy="10.5" r="3.8" fill="#eee" stroke="#111" stroke-width="0.8"/><rect x="5.8" y="6.2" width="3" height="3" fill="#fff" stroke="#1050d0" stroke-width="1"/></svg>
<svg class="a" style="left:392px;top:1012px" width="8" height="14" viewBox="0 0 8 14"><path d="M1,5.5L4,1.5L7,5.5ZM1,8.5L4,12.5L7,8.5Z" fill="#bbb"/></svg>
<div class="a" style="left:409px;top:1009px;width:152px;height:20px;border:1px solid #222;border-radius:5px;overflow:hidden;background:#222"><div class="a" style="left:0px;top:0;width:19px;height:18px;background:linear-gradient(#505050,#3a3a3a)"></div><div class="a" style="left:20px;top:0;width:19px;height:18px;background:linear-gradient(#6a94d4,#4a76b8)"></div><div class="a" style="left:40px;top:0;width:19px;height:18px;background:linear-gradient(#505050,#3a3a3a)"></div><div class="a" style="left:60px;top:0;width:19px;height:18px;background:linear-gradient(#505050,#3a3a3a)"></div><div class="a" style="left:80px;top:0;width:71px;height:18px;background:linear-gradient(#505050,#3a3a3a)"></div></div>
<svg class="a" style="left:413px;top:1011px" width="16" height="16" viewBox="0 0 16 16"><path d="M8,9V2" stroke="#fff" stroke-width="3"/><path d="M8,9V2.5" stroke="#4a7ae0" stroke-width="1.6"/><path d="M8,9L2.5,12.5" stroke="#fff" stroke-width="3"/><path d="M8,9L3,12.2" stroke="#e03020" stroke-width="1.6"/><path d="M8,9L13.5,12.5" stroke="#fff" stroke-width="3"/><path d="M8,9L13,12.2" stroke="#40c020" stroke-width="1.6"/></svg>
<svg class="a" style="left:432px;top:1011px" width="16" height="16" viewBox="0 0 16 16"><path d="M3,13L12,4M7,3.5H12.5V9" stroke="#1a2a48" stroke-width="3.2" fill="none"/><path d="M3,13L12,4M7,3.5H12.5V9" stroke="#a8c8f8" stroke-width="1.6" fill="none"/></svg>
<svg class="a" style="left:452px;top:1011px" width="16" height="16" viewBox="0 0 16 16"><path d="M3,14C3,8 7,4 13,3.5" stroke="#1a2a48" stroke-width="3.2" fill="none"/><path d="M3,14C3,8 7,4 13,3.5" stroke="#5a84c0" stroke-width="1.8" fill="none"/></svg>
<svg class="a" style="left:472px;top:1011px" width="16" height="16" viewBox="0 0 16 16"><path d="M3,13L9,7" stroke="#1a2a48" stroke-width="3" /><path d="M3,13L9,7" stroke="#5a84c0" stroke-width="1.6"/><rect x="8.5" y="2.5" width="5" height="5" fill="#5a84c0" stroke="#1a2a48" stroke-width="0.8"/></svg>
<div class="t" style="left:496px;top:1015.2px;font-size:11px;color:#fff;">Global</div>
<svg class="a" style="left:549px;top:1012px" width="8" height="14" viewBox="0 0 8 14"><path d="M1,5.5L4,1.5L7,5.5ZM1,8.5L4,12.5L7,8.5Z" fill="#bbb"/></svg>
<div class="a" style="left:566px;top:1009px;width:60px;height:20px;border:1px solid #222;border-radius:5px;overflow:hidden;background:#222"><div class="a" style="left:0px;top:0;width:19px;height:18px;background:linear-gradient(#a8a8a8,#9a9a9a)"></div><div class="a" style="left:20px;top:0;width:19px;height:18px;background:linear-gradient(#5c5c5c,#4c4c4c)"></div><div class="a" style="left:40px;top:0;width:19px;height:18px;background:linear-gradient(#a8a8a8,#9a9a9a)"></div></div>
<svg class="a" style="left:569px;top:1012px" width="14" height="14" viewBox="0 0 14 14"><path d="M7,1.5L12.5,4V10.5L7,13.5L1.5,10.5V4Z" fill="#888" stroke="#666" stroke-width="0.6"/><path d="M7,1.5L12.5,4L7,6.5L1.5,4Z" fill="#cfcfcf"/><path d="M1.5,4L7,6.5V13.5L1.5,10.5Z" fill="#bdbdbd"/><circle cx="2.5" cy="2.5" r="1.8" fill="#f4b070" stroke="#6a3a10" stroke-width="0.6"/></svg>
<svg class="a" style="left:589px;top:1012px" width="14" height="14" viewBox="0 0 14 14"><path d="M7,1.5L12.5,4V10.5L7,13.5L1.5,10.5V4Z" fill="#888" stroke="#666" stroke-width="0.6"/><path d="M7,1.5L12.5,4L7,6.5L1.5,4Z" fill="#cfcfcf"/><path d="M1.5,4L7,6.5V13.5L1.5,10.5Z" fill="#bdbdbd"/><rect x="0.5" y="3.5" width="2" height="8" fill="#f8a040" stroke="#3a2000" stroke-width="0.6"/></svg>
<svg class="a" style="left:609px;top:1012px" width="14" height="14" viewBox="0 0 14 14"><path d="M7,1.5L12.5,4V10.5L7,13.5L1.5,10.5V4Z" fill="#888" stroke="#666" stroke-width="0.6"/><path d="M7,1.5L12.5,4L7,6.5L1.5,4Z" fill="#cfcfcf"/><path d="M1.5,4L7,6.5V13.5L1.5,10.5Z" fill="#d8a878"/></svg>
<svg class="a" style="left:631px;top:1009px" width="20" height="20" viewBox="0 0 20 20"><rect x="0.5" y="0.5" width="19" height="19" rx="4" fill="#6a6a6a" stroke="#333"/><rect x="5" y="6" width="9" height="9" fill="#ccc"/><g fill="#fff" stroke="#000" stroke-width="0.9"><circle cx="4.8" cy="6.2" r="1.5"/><circle cx="13.2" cy="6.2" r="1.5"/><circle cx="4.8" cy="14.8" r="1.5"/><circle cx="13.2" cy="14.8" r="1.5"/></g><g fill="#ddd" stroke="#222" stroke-width="0.6"><circle cx="8" cy="3.5" r="1.2"/><circle cx="15.8" cy="3.5" r="1.2"/><circle cx="15.8" cy="11" r="1.2"/></g></svg>
<div class="a" style="left:656px;top:1009px;width:35px;height:20px;border:1px solid #222;border-radius:5px;background:linear-gradient(#505050,#3a3a3a);"></div>
<svg class="a" style="left:662px;top:1012px" width="14" height="14" viewBox="0 0 14 14"><circle cx="7" cy="7" r="5.5" fill="#666" stroke="#555" stroke-width="0.8"/><circle cx="7" cy="7" r="2.5" fill="#5a5a5a" stroke="#777" stroke-width="0.8"/></svg>
<svg class="a" style="left:680px;top:1012px" width="8" height="14" viewBox="0 0 8 14"><path d="M1,5.5L4,1.5L7,5.5ZM1,8.5L4,12.5L7,8.5Z" fill="#bbb"/></svg>
<div class="a" style="left:696px;top:1009px;width:146px;height:20px;border:1px solid #222;border-radius:5px;overflow:hidden;background:#222"><div class="a" style="left:0px;top:0;width:18px;height:18px;background:linear-gradient(#8a8a8a,#7a7a7a)"></div><div class="a" style="left:19px;top:0;width:35px;height:18px;background:linear-gradient(#505050,#3a3a3a)"></div><div class="a" style="left:55px;top:0;width:70px;height:18px;background:linear-gradient(#505050,#3a3a3a)"></div><div class="a" style="left:126px;top:0;width:19px;height:18px;background:linear-gradient(#8a8a8a,#7a7a7a)"></div></div>
<svg class="a" style="left:698px;top:1010px" width="18" height="18" viewBox="0 0 18 18"><path d="M3,10L8.5,4.5A3.3,3.3 0 0 1 13.2,9.2L7.7,14.7" stroke="#1a1a1a" stroke-width="4.6" fill="none"/><path d="M3,10L8.5,4.5A3.3,3.3 0 0 1 13.2,9.2L7.7,14.7" stroke="#e8581e" stroke-width="2.8" fill="none"/><path d="M3,10L4.6,8.4M7.7,14.7L9.3,13.1" stroke="#f4f4f4" stroke-width="2.8"/></svg>
<svg class="a" style="left:717px;top:1012px" width="16" height="16" viewBox="0 0 16 16"><path d="M9,2L14,4.3V11L9,13.5L4,11V4.3Z" fill="#999" stroke="#444" stroke-width="0.6"/><path d="M4,4.3L9,6.5L14,4.3" stroke="#ccc" stroke-width="0.6" fill="none"/><g fill="#fff" stroke="#000" stroke-width="0.9"><circle cx="2.3" cy="2.5" r="1.5"/><circle cx="2.3" cy="10.5" r="1.5"/></g><path d="M2.3,2.5V10.5" stroke="#000" stroke-width="0.9"/></svg>
<svg class="a" style="left:738px;top:1012px" width="8" height="14" viewBox="0 0 8 14"><path d="M1,5.5L4,1.5L7,5.5ZM1,8.5L4,12.5L7,8.5Z" fill="#bbb"/></svg>
<div class="t" style="left:758px;top:1015.2px;font-size:11px;color:#fff;">Closest</div>
<svg class="a" style="left:811px;top:1012px" width="8" height="14" viewBox="0 0 8 14"><path d="M1,5.5L4,1.5L7,5.5ZM1,8.5L4,12.5L7,8.5Z" fill="#bbb"/></svg>
<svg class="a" style="left:823px;top:1011px" width="18" height="16" viewBox="0 0 18 16"><rect x="3" y="5" width="8" height="8" fill="#ccc"/><g fill="#fff" stroke="#000" stroke-width="0.9"><circle cx="3" cy="5" r="1.5"/><circle cx="11" cy="5" r="1.5"/><circle cx="3" cy="13" r="1.5"/><circle cx="11" cy="13" r="1.5"/></g><g fill="#ddd" stroke="#222" stroke-width="0.6"><circle cx="7" cy="2.5" r="1.2"/><circle cx="14" cy="2.5" r="1.2"/><circle cx="14" cy="9" r="1.2"/></g></svg>
<div class="a" style="left:847px;top:1009px;width:19px;height:20px;border:1px solid #2a2a2a;border-radius:5px;background:linear-gradient(#a8a8a8,#8c8c8c);background:linear-gradient(#8a8a8a,#7a7a7a)"></div>
<svg class="a" style="left:849px;top:1011px" width="16" height="16" viewBox="0 0 16 16"><path d="M3,13L7,9M13,3L9,7M6.5,6.5V9.5H9.5M9.5,9.5" stroke="#222" stroke-width="3" fill="none"/><path d="M3,13L7,9M13,3L9,7" stroke="#fff" stroke-width="1.5"/><path d="M7,6V9H10M9,10V7H6" stroke="#fff" stroke-width="1.5" fill="none"/><circle cx="3" cy="13" r="1.3" fill="#f0a040"/><circle cx="13" cy="3" r="1.3" fill="#f0a040"/></svg>
<div class="a" style="left:872px;top:1009px;width:39px;height:20px;border:1px solid #222;border-radius:5px;overflow:hidden;background:#222"><div class="a" style="left:0px;top:0;width:19px;height:18px;background:linear-gradient(#8a8a8a,#7a7a7a)"></div><div class="a" style="left:20px;top:0;width:18px;height:18px;background:linear-gradient(#8a8a8a,#7a7a7a)"></div></div>
<svg class="a" style="left:874px;top:1011px" width="16" height="16" viewBox="0 0 16 16"><rect x="1" y="5" width="13" height="9" rx="1" fill="#555" stroke="#111" stroke-width="0.9"/><rect x="2" y="5.5" width="11" height="2.5" fill="#ddd"/><circle cx="7.5" cy="10" r="3" fill="#222" stroke="#ddd" stroke-width="1"/><circle cx="7.5" cy="10" r="1.3" fill="#8a3030"/><path d="M12,1V6M9.5,3.5H14.5" stroke="#ffe040" stroke-width="1.6"/></svg>
<svg class="a" style="left:893px;top:1011px" width="16" height="16" viewBox="0 0 16 16"><rect x="2" y="7" width="12" height="8" fill="#555" stroke="#111" stroke-width="0.9"/><path d="M2,7L13,3.5" stroke="#111" stroke-width="3"/><path d="M2.5,6.5L13,3.2" stroke="#fff" stroke-width="1.6" stroke-dasharray="2 1.5"/><rect x="2" y="8" width="12" height="1.5" fill="#ddd"/><path d="M1.5,5L3.5,4.5V9H1.5Z" fill="#5a8ae0"/></svg>
<div class="a" style="left:1667px;top:1009px;width:29px;height:20px;border:1px solid #222;border-radius:5px;background:linear-gradient(#505050,#3a3a3a);"></div>
<svg class="a" style="left:1671px;top:1012px" width="14" height="14" viewBox="0 0 14 14"><path d="M7,1L12.5,3V10L7,13L1.5,10V3Z" fill="#fff" stroke="#111" stroke-width="1"/><path d="M7,4.5L12.5,3V10L7,13Z" fill="#888"/><path d="M1.5,3L7,4.5L12.5,3" stroke="#bbb" stroke-width="0.6" fill="none"/><path d="M1.5,3.2V10L7,13V4.5Z" fill="#ddd"/></svg>
<svg class="a" style="left:1685px;top:1012px" width="8" height="14" viewBox="0 0 8 14"><path d="M1,5.5L4,1.5L7,5.5ZM1,8.5L4,12.5L7,8.5Z" fill="#bdbdbd"/></svg>
<div class="t" style="left:1709px;top:1015.2px;font-size:11px;color:#000;">View</div>
<div class="t" style="left:1753px;top:1015.2px;font-size:11px;color:#000;">Select</div>
<div class="t" style="left:1804px;top:1015.2px;font-size:11px;color:#000;">Add</div>
<div class="t" style="left:1843px;top:1015.2px;font-size:11px;color:#000;">Mesh</div>
<div class="a" style="left:1882px;top:1009px;width:60px;height:20px;border:1px solid #222;border-radius:5px;background:linear-gradient(#505050,#3a3a3a);"></div>
<svg class="a" style="left:1886px;top:1011px" width="16" height="16" viewBox="0 0 16 16"><path d="M8,2L13,4V11L8,14L3,11V4Z" fill="#bbb" stroke="#444" stroke-width="0.8"/><g fill="#fff" stroke="#c06000" stroke-width="1"><rect x="1.5" y="1.5" width="2.5" height="2.5"/><rect x="7.5" y="4" width="2.5" height="2.5"/><rect x="1.5" y="9.5" width="2.5" height="2.5"/><rect x="7.5" y="12" width="2.5" height="2.5"/></g></svg>
<div class="t" style="left:1906px;top:1015.2px;font-size:11px;color:#fff;">Edi</div>
<div class="a" style="left:0px;top:1032px;width:1920px;height:48px;background:linear-gradient(#e8e8e8,#f4f4f4 30%,#f0f0f0)"></div>
<div class="a" style="left:0px;top:1032px;width:1920px;height:1px;background:#8a8a8a"></div>
<div class="a" style="left:0px;top:1033px;width:70px;height:47px;background:linear-gradient(90deg,#d4d4d4,#c8c8c8 60%,#e0e0e0)"></div>
<svg class="a" style="left:11px;top:1034px" width="44" height="44" viewBox="0 0 44 44"><defs><radialGradient id="orb" cx="0.5" cy="0.75" r="0.7"><stop offset="0" stop-color="#30d0f0"/><stop offset="0.5" stop-color="#1a6ab0"/><stop offset="1" stop-color="#0a3a70"/></radialGradient></defs><circle cx="22" cy="22" r="20.5" fill="url(#orb)" stroke="#0a3060" stroke-width="1"/><path d="M11,12Q16,8 21,12L19.5,20Q14.5,16 9.5,20Z" fill="#f05a20"/><path d="M23,12Q28,16 33,12L31.5,20Q26.5,24 21.5,20Z" fill="#80c030"/><path d="M9,22Q14,18 19,22L17.5,30Q12.5,26 7.5,30Z" fill="#30a0e0"/><path d="M21,22Q26,26 31,22L29.5,30Q24.5,34 19.5,30Z" fill="#f8c020"/><ellipse cx="22" cy="12" rx="16" ry="9" fill="#fff" opacity="0.25"/></svg>
<div class="a" style="left:72px;top:1033px;width:59px;height:47px;border:1px solid #9a9a9a;border-radius:3px;background:linear-gradient(#fafafa,#e4e4e4)"></div>
<svg class="a" style="left:82px;top:1038px" width="38" height="36" viewBox="0 0 38 36"><rect x="5" y="5" width="28" height="26" fill="#fff" stroke="#aaa"/><rect x="6" y="6" width="26" height="24" fill="#5aa0e0"/><path d="M6,18Q14,14 22,20T32,21V30H6Z" fill="#3a8a5a"/><rect x="6" y="24" width="26" height="6" fill="#6ab0e0"/><path d="M2,2H9V5H5V9H2ZM36,2H29V5H33V9H36ZM2,34H9V31H5V27H2ZM36,34H29V31H33V27H36Z" fill="#3a8ad8"/></svg>
<div class="a" style="left:133px;top:1033px;width:1px;height:47px;background:#aaa"></div>
<div class="a" style="left:136px;top:1033px;width:1px;height:47px;background:#bbb"></div>
<div class="a" style="left:141px;top:1033px;width:67px;height:47px;border:1px solid #3a2a1a;border-radius:3px;background:linear-gradient(#fff2e6,#f8caa0 60%,#fde0c4)"></div>
<svg class="a" style="left:153px;top:1036px" width="42" height="42" viewBox="0 0 42 42"><g transform="scale(1.3125)"><g stroke="#f27c1a" stroke-linecap="round" fill="none"><path d="M20,9L15,3" stroke-width="4.5"/><path d="M17,11.5L5,8.8" stroke-width="4"/><path d="M15,18L3.5,24.5" stroke-width="4.5"/></g><circle cx="21" cy="16" r="9.5" fill="#f27c1a"/><circle cx="21.5" cy="15.5" r="6.2" fill="#fff"/><circle cx="21.8" cy="15.5" r="3.6" fill="#1b4f9c"/></g></svg>
<div class="a" style="left:1676px;top:1033px;width:21px;height:47px;border:1px solid #aaa;background:#fafafa"></div>
<div class="a" style="left:1697px;top:1033px;width:208px;height:47px;background:linear-gradient(90deg,#b8b8b8,#c4c4c4 30%,#bcbcbc 70%,#b0b0b0)"></div>
<div class="t" style="left:1707px;top:1048.5px;font-size:12.5px;color:#f4f4f4;text-shadow:0 0 2px #777">ES</div>
<svg class="a" style="left:1746px;top:1052px" width="13" height="9" viewBox="0 0 13 9"><path d="M1,8L6.5,1.5L12,8Z" fill="#f4f4f4" stroke="#667" stroke-width="0.8"/></svg>
<svg class="a" style="left:1773px;top:1045px" width="24" height="22" viewBox="0 0 24 22"><path d="M2,7H6L11,1.5V20.5L6,15H2Z" fill="#f8f8f8" stroke="#333" stroke-width="1"/><path d="M14,7Q16,11 14,15M17,4.5Q20.5,11 17,17.5" stroke="#333" stroke-width="1.1" fill="none"/></svg>
<div class="t" style="left:1800px;top:1039px;width:108px;text-align:center;font-size:14.5px;color:#fafafa;text-shadow:0 0 2px #777">0:27</div>
<div class="t" style="left:1800px;top:1061px;width:108px;text-align:center;font-size:14.5px;color:#fafafa;text-shadow:0 0 2px #777">17/02/2015</div>
<div class="a" style="left:1905px;top:1033px;width:15px;height:47px;border:1px solid #999;background:linear-gradient(90deg,#d8d8d8,#a8a8a8)"></div>
<svg class="a" style="left:1657px;top:663px" width="12" height="12" viewBox="0 0 12 12"><path d="M0,2L10,12M0,6L6,12M0,10L2,12" stroke="#2a2a2a" stroke-width="1"/><path d="M0,3L9,12M0,7L5,12" stroke="#9a9a9a" stroke-width="0.7"/></svg>
<svg class="a" style="left:1907px;top:678px" width="12" height="12" viewBox="0 0 12 12"><path d="M2,0L12,10M6,0L12,6M10,0L12,2" stroke="#2a2a2a" stroke-width="1"/><path d="M3,0L12,9M7,0L12,5" stroke="#9a9a9a" stroke-width="0.7"/></svg>
<svg class="a" style="left:1657px;top:1019px" width="12" height="12" viewBox="0 0 12 12"><path d="M0,2L10,12M0,6L6,12M0,10L2,12" stroke="#2a2a2a" stroke-width="1"/><path d="M0,3L9,12M0,7L5,12" stroke="#9a9a9a" stroke-width="0.7"/></svg>
<svg class="a" style="left:0px;top:1019px" width="12" height="12" viewBox="0 0 12 12"><path d="M0,2L10,12M0,6L6,12M0,10L2,12" stroke="#2a2a2a" stroke-width="1"/><path d="M0,3L9,12M0,7L5,12" stroke="#9a9a9a" stroke-width="0.7"/></svg>
<svg class="a" style="left:0px;top:43px" width="12" height="12" viewBox="0 0 12 12"><path d="M0,2L10,12M0,6L6,12M0,10L2,12" stroke="#2a2a2a" stroke-width="1"/><path d="M0,3L9,12M0,7L5,12" stroke="#9a9a9a" stroke-width="0.7"/></svg>
<svg class="a" style="left:1907px;top:58px" width="12" height="12" viewBox="0 0 12 12"><path d="M2,0L12,10M6,0L12,6M10,0L12,2" stroke="#2a2a2a" stroke-width="1"/><path d="M3,0L12,9M7,0L12,5" stroke="#9a9a9a" stroke-width="0.7"/></svg>
<svg class="a" style="left:1907px;top:30px" width="12" height="12" viewBox="0 0 12 12"><path d="M2,0L12,10M6,0L12,6M10,0L12,2" stroke="#2a2a2a" stroke-width="1"/><path d="M3,0L12,9M7,0L12,5" stroke="#9a9a9a" stroke-width="0.7"/></svg>
</body></html>
